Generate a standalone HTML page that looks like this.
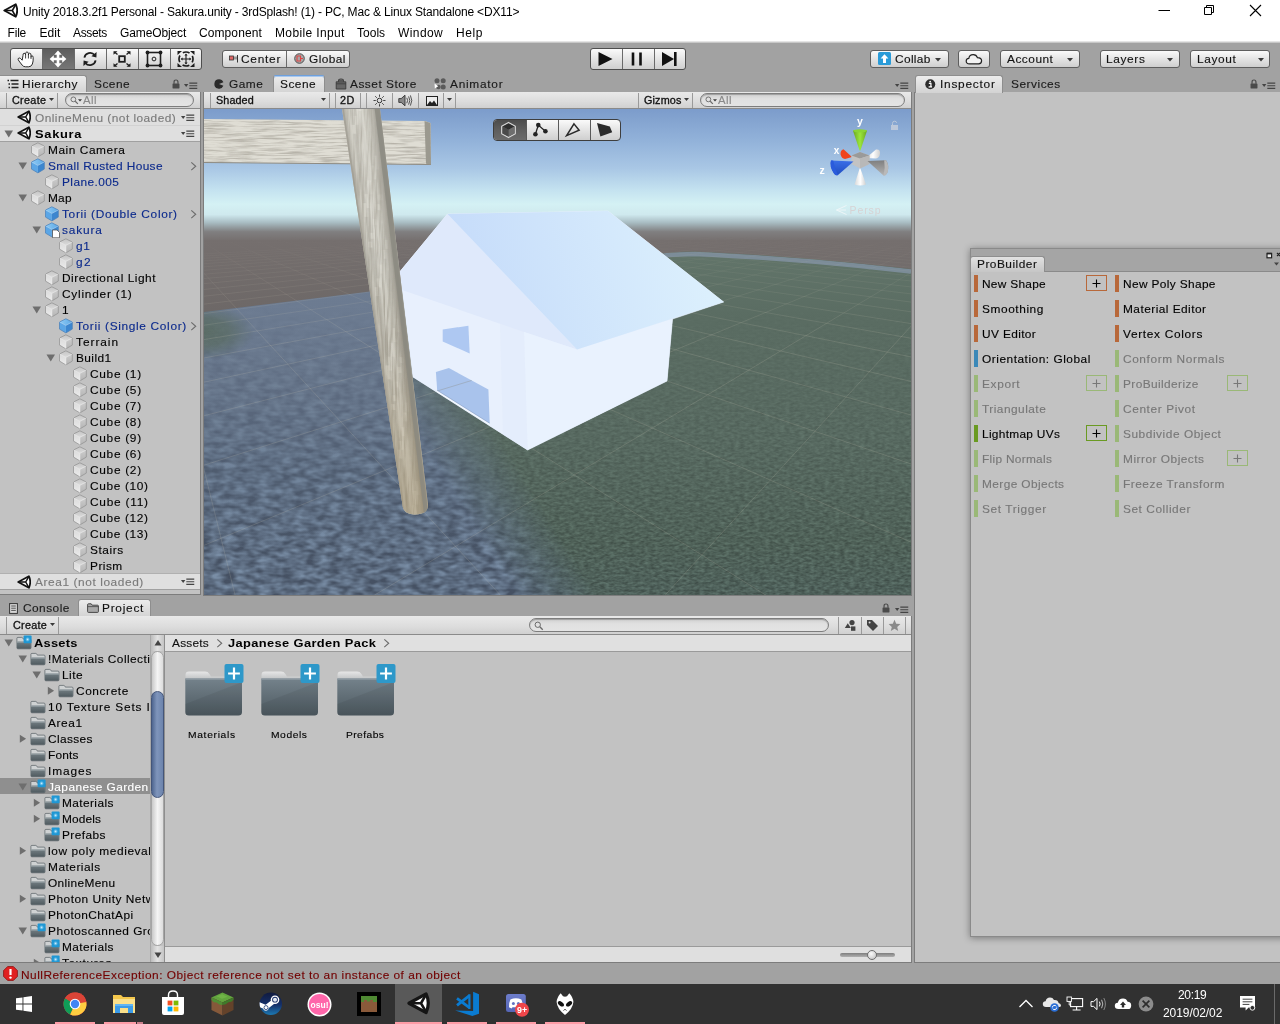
<!DOCTYPE html>
<html><head><meta charset="utf-8"><title>Unity</title>
<style>
html,body{margin:0;padding:0;width:1280px;height:1024px;overflow:hidden;background:#a2a2a2;font-family:"Liberation Sans",sans-serif;}
.t{position:absolute;white-space:pre;display:block}
.a{position:absolute;display:block}
svg{position:absolute;display:block;overflow:visible}
.btn{position:absolute;box-sizing:border-box;border:1px solid #5e5e5e;background:linear-gradient(#fafafa,#e6e6e6 45%,#cfcfcf);border-radius:3px}
.btn.on{background:linear-gradient(#5a5a5a,#6e6e6e 50%,#7a7a7a);}
.tb{position:absolute;background:linear-gradient(#e9e9e9,#dcdcdc 60%,#d0d0d0);border-bottom:1px solid #8a8a8a;box-sizing:border-box}
.sep{position:absolute;width:1px;background:#9a9a9a}
.tab{position:absolute;box-sizing:border-box;background:linear-gradient(#ececec,#d3d3d3);border:1px solid #8e8e8e;border-bottom:none;border-radius:3px 3px 0 0}
.panel{position:absolute;background:#c2c2c2;box-sizing:border-box}
.search{position:absolute;box-sizing:border-box;border:1px solid #7d7d7d;border-radius:7px;background:linear-gradient(#cfcfcf,#e0e0e0 40%,#e4e4e4);box-shadow:inset 0 1px 1px rgba(0,0,0,.25)}
</style></head><body><div id="root" style="position:absolute;left:0;top:0;width:1280px;height:1024px;will-change:transform">
<svg width="0" height="0" style="position:absolute"><defs>
<symbol id="unity" viewBox="0 0 14 14"><path d="M1.2 7 L11.9 1.2 Q14.6 7 11.9 12.8 Z" fill="#fff" stroke="#111" stroke-width="1.75" stroke-linejoin="round"/><path d="M1.5 7 H8.7 M8.7 7 L11.8 1.6 M8.7 7 L11.8 12.4" fill="none" stroke="#111" stroke-width="1.45"/></symbol>
<symbol id="unityw" viewBox="0 0 14 14"><path d="M1.1 7 L10.9 1.2 Q13.4 7 10.9 12.8 Z" fill="none" stroke="#fff" stroke-width="1.9" stroke-linejoin="round"/><path d="M1.5 7 H8 M8 7 L10.7 1.6 M8 7 L10.7 12.4" fill="none" stroke="#fff" stroke-width="1.7"/></symbol>
<linearGradient id="cgt" x1="0" y1="0" x2="0" y2="1"><stop offset="0" stop-color="#c4c4c4"/><stop offset="1" stop-color="#dcdcdc"/></linearGradient><linearGradient id="cgl" x1="0" y1="0" x2="0" y2="1"><stop offset="0" stop-color="#dadada"/><stop offset="1" stop-color="#ececec"/></linearGradient><linearGradient id="cgr" x1="0" y1="0" x2="0" y2="1"><stop offset="0" stop-color="#cdcdcd"/><stop offset="1" stop-color="#b4b4b4"/></linearGradient><linearGradient id="bgt" x1="0" y1="0" x2="1" y2="0"><stop offset="0" stop-color="#8ecbf6"/><stop offset="1" stop-color="#5ea9e6"/></linearGradient><linearGradient id="fgb" x1="0" y1="0" x2="0" y2="1"><stop offset="0" stop-color="#747f84"/><stop offset="1" stop-color="#4f5a5f"/></linearGradient><radialGradient id="bdg"><stop offset="0" stop-color="#d8f2ff"/><stop offset="1" stop-color="#6cc4ee" stop-opacity="0.2"/></radialGradient><linearGradient id="gtop" x1="0" y1="0" x2="0" y2="1"><stop offset="0" stop-color="#ffffff"/><stop offset="1" stop-color="#e8e8e8"/></linearGradient>
<symbol id="cube" viewBox="0 0 16 16"><path d="M7.9 0.8 L14.3 4 L7.9 7.4 L1.5 4Z" fill="url(#cgt)"/><path d="M7.9 7.4 L14.3 4 L14.3 11.1 L7.9 14.9Z" fill="url(#cgr)"/><path d="M1.5 4 L7.9 7.4 L7.9 14.9 L1.5 11.1Z" fill="url(#cgl)"/><path d="M7.9 0.8 L14.3 4 L14.3 11.1 L7.9 14.9 L1.5 11.1 L1.5 4Z" fill="none" stroke="#909090" stroke-width="0.8" stroke-linejoin="round" opacity="0.9"/><path d="M1.5 4 L7.9 7.4 L14.3 4 M7.9 7.4 V14.9" fill="none" stroke="#f4f4f4" stroke-width="0.6" opacity="0.8"/></symbol>
<symbol id="bcube" viewBox="0 0 16 16"><path d="M7.9 0.8 L14.3 4 L7.9 7.4 L1.5 4Z" fill="url(#bgt)"/><path d="M7.9 7.4 L14.3 4 L14.3 11.1 L7.9 14.9Z" fill="#3c86cf"/><path d="M1.5 4 L7.9 7.4 L7.9 14.9 L1.5 11.1Z" fill="#5ba6e6"/><path d="M7.9 0.8 L14.3 4 L14.3 11.1 L7.9 14.9 L1.5 11.1 L1.5 4Z" fill="none" stroke="#4a7fb8" stroke-width="0.8" stroke-linejoin="round" opacity="0.9"/><path d="M1.5 4 L7.9 7.4 L14.3 4" fill="none" stroke="#b5dcfa" stroke-width="0.6" opacity="0.8"/></symbol>
<symbol id="mcube" viewBox="0 0 16 16"><use href="#bcube"/><path d="M8.5 8 H13 L15.5 10.5 V15.8 H8.5Z" fill="#fff" stroke="#555" stroke-width="0.8"/></symbol>
<symbol id="fold" viewBox="0 0 16 16"><path d="M0.9 3.4 Q0.9 2.4 1.9 2.4 H5.6 Q6.5 2.4 6.9 3.3 L7.3 4.1 H14 Q15 4.1 15 5.1 V12.8 Q15 13.8 14 13.8 H1.9 Q0.9 13.8 0.9 12.8Z" fill="#cfd2d3" stroke="#565f64" stroke-width="0.7"/><path d="M1 6.4 H14.9 V12.8 Q14.9 13.7 14 13.7 H1.9 Q1 13.7 1 12.8Z" fill="url(#fgb)"/><path d="M1 6.4 H14.9 V7.5 H1Z" fill="#a3acb0"/></symbol>
<symbol id="bfold" viewBox="0 0 16 16"><use href="#fold"/><rect x="7.6" y="0.6" width="8" height="7.6" rx="0.9" fill="#1f97d4"/><circle cx="11.6" cy="4.4" r="2.3" fill="url(#bdg)"/></symbol>
<symbol id="tri-d" viewBox="0 0 10 10"><path d="M0.5 1.5 H9.5 L5 9Z" fill="#6e6e6e"/></symbol>
<symbol id="tri-r" viewBox="0 0 10 10"><path d="M2 0.5 V9.5 L9 5Z" fill="#6e6e6e"/></symbol>
<symbol id="chev" viewBox="0 0 8 12"><path d="M1.5 1.5 L6.5 6 L1.5 10.5" fill="none" stroke="#6c6c6c" stroke-width="1.3"/></symbol>
<symbol id="pmenu" viewBox="0 0 14 8"><path d="M0 2 H4.5 L2.25 5Z" fill="#444"/><path d="M5.5 1 H14 M5.5 3.7 H14 M5.5 6.4 H14" stroke="#444" stroke-width="1.2"/></symbol>
<symbol id="lock" viewBox="0 0 9 11"><path d="M2.3 5.2 V3.3 Q2.3 1 4.5 1 Q6.7 1 6.7 3.3 V5.2" fill="none" stroke="#4a4a4a" stroke-width="1.3"/><rect x="0.6" y="5" width="7.8" height="5.6" rx="0.5" fill="#4a4a4a"/></symbol>
<symbol id="dd" viewBox="0 0 6 4"><path d="M0 0 H6 L3 3.6Z" fill="#3a3a3a"/></symbol>
<symbol id="mag" viewBox="0 0 12 12"><circle cx="4.5" cy="4.5" r="3.2" fill="none" stroke="#6a6a6a" stroke-width="1.2"/><path d="M7 7 L10.5 10.5" stroke="#6a6a6a" stroke-width="1.6"/></symbol>
</defs></svg>

<div class="a" style="left:0;top:0;width:1280px;height:42px;background:#fff"></div>
<div class="a" style="left:0;top:41px;width:1280px;height:2px;background:linear-gradient(#f4f4f4,#b8b8b8)"></div>
<svg style="left:2.5px;top:3px" width="15" height="15"><use href="#unity"/></svg>
<span class="t" style="left:23px;top:3.8px;line-height:16px;font-size:12px;color:#000;letter-spacing:-0.17px;">Unity 2018.3.2f1 Personal - Sakura.unity - 3rdSplash! (1) - PC, Mac &amp; Linux Standalone &lt;DX11&gt;</span>
<span class="t" style="left:7.5px;top:24.8px;line-height:16px;font-size:12px;color:#000;letter-spacing:-0.18px;">File</span>
<span class="t" style="left:39.5px;top:24.8px;line-height:16px;font-size:12px;color:#000;letter-spacing:0.04px;">Edit</span>
<span class="t" style="left:73px;top:24.8px;line-height:16px;font-size:12px;color:#000;letter-spacing:-0.34px;">Assets</span>
<span class="t" style="left:120px;top:24.8px;line-height:16px;font-size:12px;color:#000;letter-spacing:-0.12px;">GameObject</span>
<span class="t" style="left:199px;top:24.8px;line-height:16px;font-size:12px;color:#000;letter-spacing:0.09px;">Component</span>
<span class="t" style="left:275px;top:24.8px;line-height:16px;font-size:12px;color:#000;letter-spacing:0.36px;">Mobile Input</span>
<span class="t" style="left:357px;top:24.8px;line-height:16px;font-size:12px;color:#000;letter-spacing:0.01px;">Tools</span>
<span class="t" style="left:398px;top:24.8px;line-height:16px;font-size:12px;color:#000;letter-spacing:0.42px;">Window</span>
<span class="t" style="left:456px;top:24.8px;line-height:16px;font-size:12px;color:#000;letter-spacing:0.54px;">Help</span>
<svg style="left:1150px;top:0" width="130" height="22"><path d="M8.5 10.5 H20" stroke="#000" stroke-width="1"/><path d="M54.5 7.5 H61.5 V14.5 H54.5Z M56.5 7.5 V5.5 H63.5 V12.5 H61.5" fill="none" stroke="#000" stroke-width="1"/><path d="M100 5 L111 16 M111 5 L100 16" stroke="#000" stroke-width="1.1"/></svg>
<div class="btn" style="left:10px;top:48px;width:192px;height:22px;overflow:hidden;border-color:#4e4e4e"><div class="a" style="left:31px;top:-1px;width:33px;height:22px;background:linear-gradient(#5c5c5c,#6a6a6a 50%,#787878)"></div><div class="a" style="left:31px;top:-1px;width:1px;height:22px;background:#6a6a6a"></div><div class="a" style="left:63px;top:-1px;width:1px;height:22px;background:#6a6a6a"></div><div class="a" style="left:95px;top:-1px;width:1px;height:22px;background:#6a6a6a"></div><div class="a" style="left:127px;top:-1px;width:1px;height:22px;background:#6a6a6a"></div><div class="a" style="left:159px;top:-1px;width:1px;height:22px;background:#6a6a6a"></div></div>
<svg style="left:10px;top:48px" width="32" height="22" viewBox="0 0 32 22"><path d="M12.2 12.2 L10.4 10.4 Q9 9.4 8.2 10.6 Q7.8 11.6 9 13 L12.2 17.2 Q13.4 18.8 15.6 18.8 H18.6 Q21.4 18.8 22.4 16 Q23.4 13 23.2 9.6 Q23.2 7.6 21.8 7.8 Q21 8 21 9.4 L21 7 Q21 5.2 19.6 5.2 Q18.4 5.4 18.4 7 L18.4 5.6 Q18.2 3.8 16.8 4 Q15.6 4.2 15.6 5.8 L15.6 6.8 Q15.4 5 14 5.2 Q12.8 5.6 13 7.4 Z" fill="#fff" stroke="#222" stroke-width="0.95" stroke-linejoin="round"/><path d="M15.6 6.8 V10.5 M18.4 7 V10.5 M21 9.4 V11" stroke="#222" stroke-width="0.85" fill="none"/></svg>
<svg style="left:42px;top:48px" width="32" height="22" viewBox="0 0 32 22"><path d="M16 2.6 L19.8 6.8 H17.3 V9.7 H20.2 V7.2 L24.4 11 L20.2 14.8 V12.3 H17.3 V15.2 H19.8 L16 19.4 L12.2 15.2 H14.7 V12.3 H11.8 V14.8 L7.6 11 L11.8 7.2 V9.7 H14.7 V6.8 H12.2Z" fill="#fff"/></svg>
<svg style="left:74px;top:48px" width="32" height="22" viewBox="0 0 32 22"><path d="M10.4 9.6 A5.8 5.8 0 0 1 20.6 7" fill="none" stroke="#1e1e1e" stroke-width="1.8"/><path d="M22.6 4 L22.4 9.6 L17.4 8.2Z" fill="#1e1e1e"/><path d="M21.6 12.4 A5.8 5.8 0 0 1 11.4 15" fill="none" stroke="#1e1e1e" stroke-width="1.8"/><path d="M9.4 18 L9.6 12.4 L14.6 13.8Z" fill="#1e1e1e"/></svg>
<svg style="left:106px;top:48px" width="32" height="22" viewBox="0 0 32 22"><rect x="13.2" y="8.2" width="5.6" height="5.6" fill="none" stroke="#1e1e1e" stroke-width="1.8"/><path d="M11.5 6.5 L8.5 4 M20.5 6.5 L23.5 4 M11.5 15.5 L8.5 18 M20.5 15.5 L23.5 18" stroke="#1e1e1e" stroke-width="1.4"/><path d="M7.5 3.2 H11.5 L7.5 6.8Z M24.5 3.2 H20.5 L24.5 6.8Z M7.5 18.8 H11.5 L7.5 15.2Z M24.5 18.8 H20.5 L24.5 15.2Z" fill="#1e1e1e"/></svg>
<svg style="left:138px;top:48px" width="32" height="22" viewBox="0 0 32 22"><rect x="9.5" y="4.5" width="13" height="13" fill="none" stroke="#1e1e1e" stroke-width="1.6"/><circle cx="9.5" cy="4.5" r="1.9" fill="#1e1e1e"/><circle cx="22.5" cy="4.5" r="1.9" fill="#1e1e1e"/><circle cx="9.5" cy="17.5" r="1.9" fill="#1e1e1e"/><circle cx="22.5" cy="17.5" r="1.9" fill="#1e1e1e"/><circle cx="16" cy="11" r="1.9" fill="none" stroke="#1e1e1e" stroke-width="1"/></svg>
<svg style="left:170px;top:48px" width="32" height="22" viewBox="0 0 32 22"><circle cx="16" cy="11" r="7" fill="none" stroke="#1e1e1e" stroke-width="1.7" stroke-dasharray="7 4" stroke-dashoffset="3.5"/><path d="M7.5 3 H12 L7.5 7Z M24.5 3 H20 L24.5 7Z M7.5 19 H12 L7.5 15Z M24.5 19 H20 L24.5 15Z" fill="#1e1e1e"/><path d="M16 6.5 V15.5 M11.5 11 H20.5" stroke="#1e1e1e" stroke-width="1.1"/><path d="M16 5.6 L17.6 7.6 H14.4Z M16 16.4 L17.6 14.4 H14.4Z M10.6 11 L12.6 9.4 V12.6Z M21.4 11 L19.4 9.4 V12.6Z" fill="#1e1e1e"/></svg>
<div class="btn" style="left:222px;top:50px;width:128px;height:18px"></div>
<div class="a" style="left:286px;top:51px;width:1px;height:16px;background:#6a6a6a"></div>
<svg style="left:229px;top:54px" width="10" height="10" viewBox="0 0 10 10"><rect x="0.5" y="2" width="4" height="4" fill="#d66" stroke="#333" stroke-width="0.8"/><path d="M4.5 4 H8.5 M8.5 1 V8.5" stroke="#333" stroke-width="1"/><rect x="5" y="2.5" width="3" height="3" fill="#999"/></svg>
<span class="t" style="left:241.3px;top:51.3px;line-height:16px;font-size:11px;color:#111;letter-spacing:0.69px;transform:scaleX(1.08);transform-origin:0 0;-webkit-text-stroke:0.12px;">Center</span>
<svg style="left:294px;top:53px" width="11" height="11" viewBox="0 0 11 11"><circle cx="5.5" cy="5.5" r="4.8" fill="#a8a8a8" stroke="#444" stroke-width="0.9"/><path d="M3 3 H6.5 V8 H3Z" fill="none" stroke="#d44" stroke-width="1.1"/><path d="M6.5 5.5 H9" stroke="#d44" stroke-width="1"/></svg>
<span class="t" style="left:308.5px;top:51.3px;line-height:16px;font-size:11px;color:#111;letter-spacing:0.38px;transform:scaleX(1.08);transform-origin:0 0;-webkit-text-stroke:0.12px;">Global</span>
<div class="btn" style="left:590px;top:48px;width:96px;height:22px;border-color:#4e4e4e"></div>
<div class="a" style="left:622px;top:49px;width:1px;height:20px;background:#6a6a6a"></div><div class="a" style="left:654px;top:49px;width:1px;height:20px;background:#6a6a6a"></div>
<svg style="left:590px;top:48px" width="96" height="22" viewBox="0 0 96 22"><path d="M8.5 4 L22.5 11 L8.5 18Z" fill="#111"/><path d="M43 4.5 V17.5 M50.5 4.5 V17.5" stroke="#111" stroke-width="2.6"/><path d="M72 4 L84 11 L72 18Z" fill="#111"/><path d="M85.3 4 V18" stroke="#111" stroke-width="2.6"/></svg>
<div class="btn" style="left:870px;top:50px;width:79px;height:18px"></div>
<svg style="left:878px;top:52px" width="13" height="13" viewBox="0 0 13 13"><rect x="0" y="0" width="13" height="13" rx="1.5" fill="#2a9bd8"/><path d="M6.5 2.2 L10.4 6.4 H8 V11 H5 V6.4 H2.6Z" fill="#fff"/></svg>
<span class="t" style="left:895px;top:51.3px;line-height:16px;font-size:11px;color:#111;letter-spacing:0.32px;transform:scaleX(1.08);transform-origin:0 0;-webkit-text-stroke:0.12px;">Collab</span>
<svg style="left:935px;top:57.5px" width="6" height="4"><use href="#dd"/></svg>
<div class="btn" style="left:958px;top:50px;width:32px;height:18px"></div>
<svg style="left:965px;top:53px" width="18" height="12" viewBox="0 0 18 12"><path d="M4.5 10.8 Q1.2 10.8 1.2 8 Q1.2 5.6 3.8 5.4 Q4.4 1.6 8.2 1.6 Q11.4 1.6 12.4 4.6 Q16.6 4.6 16.6 7.8 Q16.6 10.8 13.6 10.8Z" fill="#f2f2f2" stroke="#222" stroke-width="1.2"/></svg>
<div class="btn" style="left:1000px;top:50px;width:80px;height:18px"></div>
<span class="t" style="left:1006.5px;top:51.3px;line-height:16px;font-size:11px;color:#111;letter-spacing:0.46px;transform:scaleX(1.08);transform-origin:0 0;-webkit-text-stroke:0.12px;">Account</span>
<svg style="left:1066.5px;top:57.5px" width="6" height="4"><use href="#dd"/></svg>
<div class="btn" style="left:1100px;top:50px;width:80px;height:18px"></div>
<span class="t" style="left:1106px;top:51.3px;line-height:16px;font-size:11px;color:#111;letter-spacing:0.60px;transform:scaleX(1.08);transform-origin:0 0;-webkit-text-stroke:0.12px;">Layers</span>
<svg style="left:1166.5px;top:57.5px" width="6" height="4"><use href="#dd"/></svg>
<div class="btn" style="left:1190px;top:50px;width:80px;height:18px"></div>
<span class="t" style="left:1196.5px;top:51.3px;line-height:16px;font-size:11px;color:#111;letter-spacing:0.60px;transform:scaleX(1.08);transform-origin:0 0;-webkit-text-stroke:0.12px;">Layout</span>
<svg style="left:1257.5px;top:57.5px" width="6" height="4"><use href="#dd"/></svg>
<div class="tab" style="left:-3px;top:75px;width:90px;height:18px"></div>
<svg style="left:7px;top:79px" width="12" height="10" viewBox="0 0 12 10"><path d="M0.5 1.5 H2 M3.5 1.5 H11.5 M1.5 5 H3 M4.5 5 H11.5 M1.5 8.5 H3 M4.5 8.5 H11.5" stroke="#222" stroke-width="1.5"/></svg>
<span class="t" style="left:22px;top:76.3px;line-height:16px;font-size:11px;color:#111;letter-spacing:0.53px;transform:scaleX(1.08);transform-origin:0 0;-webkit-text-stroke:0.12px;">Hierarchy</span>
<span class="t" style="left:94.2px;top:76.3px;line-height:16px;font-size:11px;color:#1a1a1a;letter-spacing:0.46px;transform:scaleX(1.08);transform-origin:0 0;-webkit-text-stroke:0.12px;">Scene</span>
<svg style="left:171.5px;top:79px" width="8" height="10"><use href="#lock"/></svg>
<svg style="left:183.5px;top:81.5px" width="13.5" height="8"><use href="#pmenu"/></svg>
<div class="panel" style="left:0;top:92px;width:201px;height:503px;border-right:1px solid #7c7c7c;border-bottom:1px solid #7c7c7c"></div>
<div class="tb" style="left:0;top:92px;width:200px;height:17px"></div>
<div class="sep" style="left:6px;top:93px;height:15px"></div><div class="sep" style="left:57px;top:93px;height:15px"></div>
<span class="t" style="left:11.8px;top:93px;line-height:16px;font-size:10px;color:#111;letter-spacing:0.29px;transform:scaleX(1.08);transform-origin:0 0;-webkit-text-stroke:0.3px;">Create</span>
<svg style="left:48.5px;top:98px" width="5" height="3.4"><use href="#dd"/></svg>
<div class="search" style="left:65px;top:93px;width:129px;height:14px"></div>
<svg style="left:69.5px;top:96px" width="9" height="9"><use href="#mag"/></svg><svg style="left:78px;top:99px" width="4" height="3"><use href="#dd"/></svg>
<span class="t" style="left:82.5px;top:91.6px;line-height:16px;font-size:10.5px;color:#8a8a8a;letter-spacing:0.40px;transform:scaleX(1.08);transform-origin:0 0;-webkit-text-stroke:0.12px;">All</span>
<div class="a" style="left:0;top:109px;width:200px;height:33px;background:#dfdfdf;border-bottom:1px solid #a0a0a0;box-sizing:border-box"></div>
<div class="a" style="left:0;top:125px;width:200px;height:1px;background:#d2d2d2"></div>
<svg style="left:17px;top:110px" width="14" height="14"><use href="#unity"/></svg>
<span class="t" style="left:34.7px;top:109.5px;line-height:16px;font-size:11px;color:#7a7a7a;letter-spacing:0.42px;transform:scaleX(1.08);transform-origin:0 0;-webkit-text-stroke:0.12px;">OnlineMenu (not loaded)</span>
<svg style="left:181px;top:114px" width="13.5" height="8"><use href="#pmenu"/></svg>
<svg style="left:4px;top:129px" width="9.5" height="9.5"><use href="#tri-d"/></svg>
<svg style="left:17px;top:126px" width="14" height="14"><use href="#unity"/></svg>
<span class="t" style="left:34.7px;top:125.5px;line-height:16px;font-size:11px;color:#000;font-weight:bold;letter-spacing:0.61px;transform:scaleX(1.17);transform-origin:0 0;">Sakura</span>
<svg style="left:181px;top:130px" width="13.5" height="8"><use href="#pmenu"/></svg>
<svg style="left:30px;top:142px" width="16" height="16"><use href="#cube"/></svg>
<span class="t" style="left:48.4px;top:142px;line-height:16px;font-size:11px;color:#000;letter-spacing:0.51px;transform:scaleX(1.08);transform-origin:0 0;-webkit-text-stroke:0.12px;">Main Camera</span>
<svg style="left:30px;top:158px" width="16" height="16"><use href="#bcube"/></svg>
<svg style="left:17.5px;top:161px" width="9.5" height="9.5"><use href="#tri-d"/></svg>
<svg style="left:189.5px;top:161px" width="7" height="10.5"><use href="#chev"/></svg>
<span class="t" style="left:48.4px;top:158px;line-height:16px;font-size:11px;color:#0c2a8c;letter-spacing:0.34px;transform:scaleX(1.08);transform-origin:0 0;-webkit-text-stroke:0.12px;">Small Rusted House</span>
<svg style="left:44px;top:174px" width="16" height="16"><use href="#cube"/></svg>
<span class="t" style="left:62.4px;top:174px;line-height:16px;font-size:11px;color:#0c2a8c;letter-spacing:0.39px;transform:scaleX(1.08);transform-origin:0 0;-webkit-text-stroke:0.12px;">Plane.005</span>
<svg style="left:30px;top:190px" width="16" height="16"><use href="#cube"/></svg>
<svg style="left:17.5px;top:193px" width="9.5" height="9.5"><use href="#tri-d"/></svg>
<span class="t" style="left:48.4px;top:190px;line-height:16px;font-size:11px;color:#000;letter-spacing:0.18px;transform:scaleX(1.08);transform-origin:0 0;-webkit-text-stroke:0.12px;">Map</span>
<svg style="left:44px;top:206px" width="16" height="16"><use href="#bcube"/></svg>
<svg style="left:189.5px;top:209px" width="7" height="10.5"><use href="#chev"/></svg>
<span class="t" style="left:62.4px;top:206px;line-height:16px;font-size:11px;color:#0c2a8c;letter-spacing:0.62px;transform:scaleX(1.08);transform-origin:0 0;-webkit-text-stroke:0.12px;">Torii (Double Color)</span>
<svg style="left:44px;top:222px" width="16" height="16"><use href="#mcube"/></svg>
<svg style="left:31.5px;top:225px" width="9.5" height="9.5"><use href="#tri-d"/></svg>
<span class="t" style="left:62.4px;top:222px;line-height:16px;font-size:11px;color:#0c2a8c;letter-spacing:0.80px;transform:scaleX(1.08);transform-origin:0 0;-webkit-text-stroke:0.12px;">sakura</span>
<svg style="left:58px;top:238px" width="16" height="16"><use href="#cube"/></svg>
<span class="t" style="left:76.4px;top:238px;line-height:16px;font-size:11px;color:#0c2a8c;letter-spacing:0.62px;transform:scaleX(1.08);transform-origin:0 0;-webkit-text-stroke:0.12px;">g1</span>
<svg style="left:58px;top:254px" width="16" height="16"><use href="#cube"/></svg>
<span class="t" style="left:76.4px;top:254px;line-height:16px;font-size:11px;color:#0c2a8c;letter-spacing:1.18px;transform:scaleX(1.08);transform-origin:0 0;-webkit-text-stroke:0.12px;">g2</span>
<svg style="left:44px;top:270px" width="16" height="16"><use href="#cube"/></svg>
<span class="t" style="left:62.4px;top:270px;line-height:16px;font-size:11px;color:#000;letter-spacing:0.48px;transform:scaleX(1.08);transform-origin:0 0;-webkit-text-stroke:0.12px;">Directional Light</span>
<svg style="left:44px;top:286px" width="16" height="16"><use href="#cube"/></svg>
<span class="t" style="left:62.4px;top:286px;line-height:16px;font-size:11px;color:#000;letter-spacing:0.71px;transform:scaleX(1.08);transform-origin:0 0;-webkit-text-stroke:0.12px;">Cylinder (1)</span>
<svg style="left:44px;top:302px" width="16" height="16"><use href="#cube"/></svg>
<svg style="left:31.5px;top:305px" width="9.5" height="9.5"><use href="#tri-d"/></svg>
<span class="t" style="left:62.4px;top:302px;line-height:16px;font-size:11px;color:#000;letter-spacing:0.40px;transform:scaleX(1.08);transform-origin:0 0;-webkit-text-stroke:0.12px;">1</span>
<svg style="left:58px;top:318px" width="16" height="16"><use href="#bcube"/></svg>
<svg style="left:189.5px;top:321px" width="7" height="10.5"><use href="#chev"/></svg>
<span class="t" style="left:76.4px;top:318px;line-height:16px;font-size:11px;color:#0c2a8c;letter-spacing:0.61px;transform:scaleX(1.08);transform-origin:0 0;-webkit-text-stroke:0.12px;">Torii (Single Color)</span>
<svg style="left:58px;top:334px" width="16" height="16"><use href="#cube"/></svg>
<span class="t" style="left:76.4px;top:334px;line-height:16px;font-size:11px;color:#000;letter-spacing:0.89px;transform:scaleX(1.08);transform-origin:0 0;-webkit-text-stroke:0.12px;">Terrain</span>
<svg style="left:58px;top:350px" width="16" height="16"><use href="#cube"/></svg>
<svg style="left:45.5px;top:353px" width="9.5" height="9.5"><use href="#tri-d"/></svg>
<span class="t" style="left:76.4px;top:350px;line-height:16px;font-size:11px;color:#000;letter-spacing:0.39px;transform:scaleX(1.08);transform-origin:0 0;-webkit-text-stroke:0.12px;">Build1</span>
<svg style="left:72px;top:366px" width="16" height="16"><use href="#cube"/></svg>
<span class="t" style="left:90.4px;top:366px;line-height:16px;font-size:11px;color:#000;letter-spacing:0.65px;transform:scaleX(1.08);transform-origin:0 0;-webkit-text-stroke:0.12px;">Cube (1)</span>
<svg style="left:72px;top:382px" width="16" height="16"><use href="#cube"/></svg>
<span class="t" style="left:90.4px;top:382px;line-height:16px;font-size:11px;color:#000;letter-spacing:0.65px;transform:scaleX(1.08);transform-origin:0 0;-webkit-text-stroke:0.12px;">Cube (5)</span>
<svg style="left:72px;top:398px" width="16" height="16"><use href="#cube"/></svg>
<span class="t" style="left:90.4px;top:398px;line-height:16px;font-size:11px;color:#000;letter-spacing:0.65px;transform:scaleX(1.08);transform-origin:0 0;-webkit-text-stroke:0.12px;">Cube (7)</span>
<svg style="left:72px;top:414px" width="16" height="16"><use href="#cube"/></svg>
<span class="t" style="left:90.4px;top:414px;line-height:16px;font-size:11px;color:#000;letter-spacing:0.65px;transform:scaleX(1.08);transform-origin:0 0;-webkit-text-stroke:0.12px;">Cube (8)</span>
<svg style="left:72px;top:430px" width="16" height="16"><use href="#cube"/></svg>
<span class="t" style="left:90.4px;top:430px;line-height:16px;font-size:11px;color:#000;letter-spacing:0.65px;transform:scaleX(1.08);transform-origin:0 0;-webkit-text-stroke:0.12px;">Cube (9)</span>
<svg style="left:72px;top:446px" width="16" height="16"><use href="#cube"/></svg>
<span class="t" style="left:90.4px;top:446px;line-height:16px;font-size:11px;color:#000;letter-spacing:0.65px;transform:scaleX(1.08);transform-origin:0 0;-webkit-text-stroke:0.12px;">Cube (6)</span>
<svg style="left:72px;top:462px" width="16" height="16"><use href="#cube"/></svg>
<span class="t" style="left:90.4px;top:462px;line-height:16px;font-size:11px;color:#000;letter-spacing:0.65px;transform:scaleX(1.08);transform-origin:0 0;-webkit-text-stroke:0.12px;">Cube (2)</span>
<svg style="left:72px;top:478px" width="16" height="16"><use href="#cube"/></svg>
<span class="t" style="left:90.4px;top:478px;line-height:16px;font-size:11px;color:#000;letter-spacing:0.60px;transform:scaleX(1.08);transform-origin:0 0;-webkit-text-stroke:0.12px;">Cube (10)</span>
<svg style="left:72px;top:494px" width="16" height="16"><use href="#cube"/></svg>
<span class="t" style="left:90.4px;top:494px;line-height:16px;font-size:11px;color:#000;letter-spacing:0.70px;transform:scaleX(1.08);transform-origin:0 0;-webkit-text-stroke:0.12px;">Cube (11)</span>
<svg style="left:72px;top:510px" width="16" height="16"><use href="#cube"/></svg>
<span class="t" style="left:90.4px;top:510px;line-height:16px;font-size:11px;color:#000;letter-spacing:0.60px;transform:scaleX(1.08);transform-origin:0 0;-webkit-text-stroke:0.12px;">Cube (12)</span>
<svg style="left:72px;top:526px" width="16" height="16"><use href="#cube"/></svg>
<span class="t" style="left:90.4px;top:526px;line-height:16px;font-size:11px;color:#000;letter-spacing:0.60px;transform:scaleX(1.08);transform-origin:0 0;-webkit-text-stroke:0.12px;">Cube (13)</span>
<svg style="left:72px;top:542px" width="16" height="16"><use href="#cube"/></svg>
<span class="t" style="left:90.4px;top:542px;line-height:16px;font-size:11px;color:#000;letter-spacing:0.51px;transform:scaleX(1.08);transform-origin:0 0;-webkit-text-stroke:0.12px;">Stairs</span>
<svg style="left:72px;top:558px" width="16" height="16"><use href="#cube"/></svg>
<span class="t" style="left:90.4px;top:558px;line-height:16px;font-size:11px;color:#000;letter-spacing:0.43px;transform:scaleX(1.08);transform-origin:0 0;-webkit-text-stroke:0.12px;">Prism</span>
<div class="a" style="left:0;top:573px;width:200px;height:17px;background:#dfdfdf;border-top:1px solid #b0b0b0;border-bottom:1px solid #a0a0a0;box-sizing:border-box"></div>
<svg style="left:17px;top:574.5px" width="14" height="14"><use href="#unity"/></svg>
<span class="t" style="left:34.7px;top:573.5px;line-height:16px;font-size:11px;color:#7a7a7a;letter-spacing:0.54px;transform:scaleX(1.08);transform-origin:0 0;-webkit-text-stroke:0.12px;">Area1 (not loaded)</span>
<svg style="left:181px;top:578px" width="13.5" height="8"><use href="#pmenu"/></svg>
<svg style="left:214px;top:79px" width="10" height="10" viewBox="0 0 10 10"><path d="M5 0.3 A4.7 4.7 0 1 0 9.4 6.8 L5 5 L9.4 3.2 A4.7 4.7 0 0 0 5 0.3Z" fill="#2a2a2a"/></svg>
<span class="t" style="left:228.75px;top:76.3px;line-height:16px;font-size:11px;color:#1a1a1a;letter-spacing:0.47px;transform:scaleX(1.08);transform-origin:0 0;-webkit-text-stroke:0.12px;">Game</span>
<div class="tab" style="left:273px;top:75px;width:52px;height:18px;border-top:1px solid #6ea0dc;box-shadow:inset 0 1px 0 #a9c8ee"></div>
<span class="t" style="left:279.5px;top:76.3px;line-height:16px;font-size:11px;color:#111;letter-spacing:0.46px;transform:scaleX(1.08);transform-origin:0 0;-webkit-text-stroke:0.12px;">Scene</span>
<svg style="left:335px;top:78px" width="12" height="12" viewBox="0 0 12 12"><path d="M1.2 3.8 H10.8 V11 H1.2Z" fill="#666" stroke="#3a3a3a" stroke-width="0.9"/><path d="M3.6 3.8 V2.6 Q3.6 1 6 1 Q8.4 1 8.4 2.6 V3.8" fill="none" stroke="#3a3a3a" stroke-width="1.1"/><path d="M1.2 5.8 H10.8" stroke="#3a3a3a" stroke-width="0.8"/><path d="M4 1.6 H8 V3.8 H4Z" fill="#555"/></svg>
<span class="t" style="left:349.5px;top:76.3px;line-height:16px;font-size:11px;color:#1a1a1a;letter-spacing:0.46px;transform:scaleX(1.08);transform-origin:0 0;-webkit-text-stroke:0.12px;">Asset Store</span>
<svg style="left:433.5px;top:78px" width="12" height="12" viewBox="0 0 12 12"><circle cx="3" cy="2.8" r="2.5" fill="#5a5a5a"/><circle cx="9.2" cy="2.8" r="2.5" fill="#5a5a5a"/><circle cx="9.2" cy="9" r="2.5" fill="#5a5a5a"/><circle cx="4.4" cy="9" r="2.3" fill="#5a5a5a"/><path d="M0.6 5.6 L4.2 8.2 L0.8 10.6Z" fill="#fff"/></svg>
<span class="t" style="left:449.5px;top:76.3px;line-height:16px;font-size:11px;color:#1a1a1a;letter-spacing:0.67px;transform:scaleX(1.08);transform-origin:0 0;-webkit-text-stroke:0.12px;">Animator</span>
<svg style="left:895px;top:81.5px" width="13.5" height="8"><use href="#pmenu"/></svg>
<div class="panel" style="left:203px;top:92px;width:709px;height:504px;border:1px solid #7c7c7c;border-top:none"></div>
<div class="tb" style="left:204px;top:92px;width:707px;height:17px"></div>
<div class="sep" style="left:210px;top:93px;height:15px"></div>
<div class="sep" style="left:329px;top:93px;height:15px"></div>
<div class="sep" style="left:335px;top:93px;height:15px"></div>
<div class="sep" style="left:360px;top:93px;height:15px"></div>
<div class="sep" style="left:366px;top:93px;height:15px"></div>
<div class="sep" style="left:392px;top:93px;height:15px"></div>
<div class="sep" style="left:418px;top:93px;height:15px"></div>
<div class="sep" style="left:443px;top:93px;height:15px"></div>
<div class="sep" style="left:455px;top:93px;height:15px"></div>
<div class="sep" style="left:638px;top:93px;height:15px"></div>
<div class="sep" style="left:692px;top:93px;height:15px"></div>
<span class="t" style="left:215.5px;top:93px;line-height:16px;font-size:10px;color:#111;letter-spacing:0.08px;transform:scaleX(1.08);transform-origin:0 0;-webkit-text-stroke:0.3px;">Shaded</span>
<svg style="left:320.5px;top:98px" width="5" height="3.4"><use href="#dd"/></svg>
<span class="t" style="left:340px;top:93px;line-height:16px;font-size:10px;color:#111;letter-spacing:0.54px;transform:scaleX(1.08);transform-origin:0 0;-webkit-text-stroke:0.3px;">2D</span>
<svg style="left:373px;top:94px" width="13" height="13" viewBox="0 0 13 13"><circle cx="6.5" cy="6.5" r="2.3" fill="none" stroke="#333" stroke-width="1"/><path d="M6.5 0.5 V2.8 M6.5 10.2 V12.5 M0.5 6.5 H2.8 M10.2 6.5 H12.5 M2.2 2.2 L3.8 3.8 M9.2 9.2 L10.8 10.8 M2.2 10.8 L3.8 9.2 M9.2 3.8 L10.8 2.2" stroke="#333" stroke-width="0.9"/></svg>
<svg style="left:397.5px;top:94px" width="15" height="13" viewBox="0 0 15 13"><path d="M0.8 4.6 H3.2 L7 1.2 V11.8 L3.2 8.4 H0.8Z" fill="#888" stroke="#333" stroke-width="0.9" stroke-linejoin="round"/><path d="M8.8 3.8 Q10.4 6.5 8.8 9.2 M10.6 2.4 Q13 6.5 10.6 10.6 M12.4 1.4 Q15.2 6.5 12.4 11.6" fill="none" stroke="#444" stroke-width="0.9"/></svg>
<svg style="left:426px;top:95.5px" width="12" height="10" viewBox="0 0 12 10"><rect x="0.5" y="0.5" width="11" height="9" fill="#eee" stroke="#222" stroke-width="1"/><path d="M1 9 L4 5 L6 7 L8 4.6 L11 9Z" fill="#222"/></svg>
<svg style="left:447px;top:98px" width="5" height="3.4"><use href="#dd"/></svg>
<span class="t" style="left:643.5px;top:93px;line-height:16px;font-size:10px;color:#111;letter-spacing:0.15px;transform:scaleX(1.08);transform-origin:0 0;-webkit-text-stroke:0.3px;">Gizmos</span>
<svg style="left:684px;top:98px" width="5" height="3.4"><use href="#dd"/></svg>
<div class="search" style="left:700px;top:93px;width:205px;height:14px"></div>
<svg style="left:704.5px;top:96px" width="9" height="9"><use href="#mag"/></svg><svg style="left:713px;top:99px" width="4" height="3"><use href="#dd"/></svg>
<span class="t" style="left:717.5px;top:91.6px;line-height:16px;font-size:10.5px;color:#8a8a8a;letter-spacing:0.40px;transform:scaleX(1.08);transform-origin:0 0;-webkit-text-stroke:0.12px;">All</span>
<svg style="left:204px;top:109px;overflow:hidden" width="707" height="486" viewBox="204 109 707 486">
<defs>
<linearGradient id="sky" gradientUnits="userSpaceOnUse" x1="0" y1="109" x2="0" y2="241">
<stop offset="0" stop-color="#7c9ccb"/><stop offset="0.25" stop-color="#93b3da"/><stop offset="0.45" stop-color="#a9c7e5"/><stop offset="0.62" stop-color="#c5e3f0"/><stop offset="0.72" stop-color="#d4f1f4"/><stop offset="0.80" stop-color="#cfe9ee"/><stop offset="0.86" stop-color="#a9bdc3"/><stop offset="0.93" stop-color="#807f80"/><stop offset="1" stop-color="#756f6e"/></linearGradient>
<linearGradient id="gnd" gradientUnits="userSpaceOnUse" x1="0" y1="240" x2="0" y2="320"><stop offset="0" stop-color="#756f6e"/><stop offset="1" stop-color="#6c6766"/></linearGradient>
<linearGradient id="terr" gradientUnits="userSpaceOnUse" x1="0" y1="250" x2="0" y2="595"><stop offset="0" stop-color="#62756a"/><stop offset="0.2" stop-color="#5a6c62"/><stop offset="0.55" stop-color="#576960"/><stop offset="0.85" stop-color="#4f6158"/><stop offset="1" stop-color="#4e605a"/></linearGradient>
<linearGradient id="blue" gradientUnits="userSpaceOnUse" x1="455" y1="495" x2="545" y2="428"><stop offset="0" stop-color="#687a92" stop-opacity="1"/><stop offset="1" stop-color="#687a92" stop-opacity="0"/></linearGradient>
<linearGradient id="bluev" gradientUnits="userSpaceOnUse" x1="0" y1="290" x2="0" y2="595"><stop offset="0" stop-color="#6d7c92"/><stop offset="0.3" stop-color="#67768b"/><stop offset="0.6" stop-color="#607085"/><stop offset="1" stop-color="#5f6f84"/></linearGradient>
<linearGradient id="roof" gradientUnits="userSpaceOnUse" x1="470" y1="300" x2="700" y2="230"><stop offset="0" stop-color="#c6dcfa"/><stop offset="1" stop-color="#dcf0fd"/></linearGradient>
<linearGradient id="pole" gradientUnits="userSpaceOnUse" x1="0" y1="0" x2="38" y2="0"><stop offset="0" stop-color="#a9a69b"/><stop offset="0.12" stop-color="#cdcbc1"/><stop offset="0.5" stop-color="#d4d2c8"/><stop offset="0.78" stop-color="#bdbaaf"/><stop offset="0.88" stop-color="#918f85"/><stop offset="1" stop-color="#8a887e"/></linearGradient>
<linearGradient id="polev" gradientUnits="userSpaceOnUse" x1="0" y1="109" x2="0" y2="515"><stop offset="0" stop-color="#fffffa" stop-opacity="0.2"/><stop offset="0.4" stop-color="#fffffa" stop-opacity="0.08"/><stop offset="0.6" stop-color="#b09c78" stop-opacity="0.05"/><stop offset="0.8" stop-color="#a8946c" stop-opacity="0.25"/><stop offset="1" stop-color="#a08a60" stop-opacity="0.4"/></linearGradient>
<filter id="noise" x="0" y="0" width="100%" height="100%" color-interpolation-filters="sRGB"><feTurbulence type="fractalNoise" baseFrequency="0.085 0.19" numOctaves="2" seed="3"/><feColorMatrix type="matrix" values="1.8 0 0 0 -0.46  1.8 0 0 0 -0.46  1.8 0 0 0 -0.46  0 0 0 0 1"/></filter>
<filter id="wood" x="0" y="0" width="100%" height="100%"><feTurbulence type="fractalNoise" baseFrequency="0.035 0.55" numOctaves="3" seed="5"/><feColorMatrix type="matrix" values="0 0 0 0 0.42  0 0 0 0 0.40  0 0 0 0 0.35  2.4 0 0 0 -0.95"/></filter>
<filter id="woodv" x="0" y="0" width="100%" height="100%"><feTurbulence type="fractalNoise" baseFrequency="0.45 0.025" numOctaves="3" seed="8"/><feColorMatrix type="matrix" values="0 0 0 0 0.32  0 0 0 0 0.30  0 0 0 0 0.25  2.4 0 0 0 -1.0"/></filter>
<linearGradient id="bmg" gradientUnits="userSpaceOnUse" x1="468" y1="517" x2="527" y2="481"><stop offset="0" stop-color="#fff"/><stop offset="1" stop-color="#000"/></linearGradient>
<radialGradient id="bmg2" gradientUnits="userSpaceOnUse" cx="204" cy="332" r="50" gradientTransform="translate(204 332) scale(1 0.55) translate(-204 -332)"><stop offset="0" stop-color="#000" stop-opacity="0.9"/><stop offset="0.5" stop-color="#000" stop-opacity="0.7"/><stop offset="1" stop-color="#000" stop-opacity="0"/></radialGradient>
<mask id="bm" maskUnits="userSpaceOnUse" x="204" y="245" width="707" height="350"><rect x="204" y="245" width="707" height="350" fill="url(#bmg)"/><path d="M204 245 H385 L400 400 L204 430Z" fill="#fff"/><rect x="204" y="245" width="200" height="200" fill="url(#bmg2)"/></mask>
<filter id="noise2" x="0" y="0" width="100%" height="100%" color-interpolation-filters="sRGB"><feTurbulence type="fractalNoise" baseFrequency="0.2 0.4" numOctaves="2" seed="11"/><feColorMatrix type="matrix" values="1.6 0 0 0 -0.3  1.6 0 0 0 -0.3  1.6 0 0 0 -0.3  0 0 0 0 1"/></filter>
<filter id="pblur" x="-5%" y="-5%" width="110%" height="110%"><feGaussianBlur stdDeviation="0.9 0.2"/></filter>
<linearGradient id="nfade" gradientUnits="userSpaceOnUse" x1="0" y1="300" x2="0" y2="560"><stop offset="0" stop-color="#000"/><stop offset="0.2" stop-color="#333"/><stop offset="1" stop-color="#fff"/></linearGradient><mask id="nf" maskUnits="userSpaceOnUse" x="204" y="245" width="707" height="350"><rect x="204" y="245" width="707" height="350" fill="url(#nfade)"/></mask>
<linearGradient id="gfade" gradientUnits="userSpaceOnUse" x1="0" y1="236" x2="0" y2="340"><stop offset="0" stop-color="#000"/><stop offset="0.2" stop-color="#444"/><stop offset="1" stop-color="#fff"/></linearGradient><mask id="gm" maskUnits="userSpaceOnUse" x="204" y="230" width="707" height="366"><rect x="204" y="230" width="707" height="366" fill="url(#gfade)"/></mask>
<clipPath id="viewclip"><rect x="204" y="236" width="707" height="359"/></clipPath>
<clipPath id="terrclip"><path d="M204 312 L370 291.5 L560 268 Q650 252 695 251.5 Q800 256 911 269 V595 H204Z"/></clipPath>
<clipPath id="plankclip"><path d="M204 119 L425 121 L430.5 123 L431 164.5 L204 162.5Z"/></clipPath>
<clipPath id="poleclip"><path d="M342 109 H380 L428 505 Q428 514 415 514.5 Q403 514 402.5 505Z"/></clipPath>
</defs>
<rect x="204" y="109" width="707" height="131" fill="url(#sky)"/>
<rect x="204" y="240" width="707" height="355" fill="url(#gnd)"/>
<!-- terrain -->
<g clip-path="url(#terrclip)">
<rect x="204" y="245" width="707" height="350" fill="url(#terr)"/>
<rect x="204" y="245" width="707" height="350" filter="url(#noise2)" opacity="0.2" mask="url(#nf)" style="mix-blend-mode:overlay"/>
<g mask="url(#bm)">
<rect x="204" y="245" width="707" height="350" fill="url(#bluev)"/>
<rect x="204" y="245" width="707" height="350" filter="url(#noise)" opacity="0.27" mask="url(#nf)" style="mix-blend-mode:overlay"/>
</g>
<path d="M600 264.5 Q650 254.5 695 254 Q800 258.5 911 271.5" fill="none" stroke="#8797ad" stroke-width="4.5" opacity="0.7"/>
</g>
<!-- grid lines -->
<g clip-path="url(#viewclip)" mask="url(#gm)"><path d="M145.7 234 L235.3 596 M167.9 234 L501.2 596 M190.1 234 L767.2 596 M212.3 234 L1033.2 596 M234.6 234 L1299.3 596 M256.8 234 L1565.2 596 M279.0 234 L1831.2 596 M301.2 234 L2097.3 596 M323.4 234 L2363.3 596 M345.7 234 L2629.2 596 M367.9 234 L2895.2 596 M390.1 234 L3161.2 596 M412.3 234 L3427.3 596 M434.6 234 L3693.3 596 M456.8 234 L3959.2 596 M479.0 234 L4225.2 596 M501.2 234 L4491.2 596 M523.5 234 L4757.2 596 M545.7 234 L5023.3 596 M567.9 234 L5289.2 596 M590.1 234 L5555.3 596 M612.3 234 L5821.2 596 M634.6 234 L6087.2 596 M656.8 234 L6353.3 596 M679.0 234 L6619.3 596 M550.6 234 L-5743.2 596 M570.8 234 L-5451.9 596 M591.0 234 L-5160.7 596 M611.2 234 L-4869.4 596 M631.4 234 L-4578.2 596 M651.7 234 L-4286.9 596 M671.9 234 L-3995.7 596 M692.1 234 L-3704.4 596 M712.3 234 L-3413.2 596 M732.5 234 L-3121.9 596 M752.7 234 L-2830.7 596 M772.9 234 L-2539.5 596 M793.2 234 L-2248.2 596 M813.4 234 L-1957.0 596 M833.6 234 L-1665.7 596 M853.8 234 L-1374.5 596 M874.0 234 L-1083.2 596 M894.2 234 L-792.0 596 M914.4 234 L-500.7 596 M934.7 234 L-209.5 596 M954.9 234 L81.8 596 M975.1 234 L373.0 596 M995.3 234 L664.3 596 M1015.5 234 L955.5 596" fill="none" stroke="#d2c9b6" stroke-width="0.9" opacity="0.19"/></g>
<!-- plank -->
<path d="M204 119 L425 121 L430.5 123 L431 164.5 L204 162.5Z" fill="#dfddd4"/>
<g clip-path="url(#plankclip)"><rect x="204" y="115" width="230" height="52" filter="url(#wood)" opacity="0.85"/></g>
<path d="M204 162.5 L431 164.5" stroke="#8e8b83" stroke-width="1.2"/>
<path d="M424.5 121 L430.5 123 L431 164.5 L426 163.8Z" fill="#9b998f"/>
<!-- house -->
<path d="M447.5 214 L608 211 L723.7 302 L672.5 319 L667 381 L527.6 450 L413 377 L400 271.5Z" fill="#e8f0fd" stroke="#e8f0fd" stroke-width="0.6"/>
<path d="M447.5 214 L400 271.5 L413 377 L527.6 450 L524 332 L577 349.5Z" fill="#e8f0fd"/>
<path d="M447.5 214 L400 271.5 L402 290 L524 332 L577 349.5Z" fill="#dfe9fb"/>
<path d="M524 332 L577 349.5 L672.5 319 L667 381 L527.6 450Z" fill="#e9f2fe"/>
<path d="M500 324 L524 332 L527.6 450 L503 434.5Z" fill="#dfe9f9" opacity="0.4"/>
<path d="M447.5 214 L608 211 L723.7 302 L577 349.5Z" fill="url(#roof)"/>
<path d="M442.7 329.4 L468.4 325.8 L469.7 353.6 L442.7 341.4Z" fill="#aec8f2"/>
<path d="M435.9 371.9 L448.9 368 L488.4 389.4 L489.7 423.4 L437.2 390.6Z" fill="#a9c3ec"/>
<path d="M437.2 391 L471.6 380.5" stroke="#98a3b0" stroke-width="0.8" opacity="0.8"/><path d="M437.2 391.4 L489.7 424.6" stroke="#f4f8ff" stroke-width="1.2"/><path d="M437.4 390.4 L489.6 423.2" stroke="#8fa3c4" stroke-width="0.6"/>
<!-- pole -->
<path d="M342 109 H380 L428 505 Q428 514 415 514.5 Q403 514 402.5 505Z" fill="#c3bfb3"/>
<g clip-path="url(#poleclip)">
<g filter="url(#pblur)"><path d="M342.0 109 L344.6 109 L404.3 516 L402.5 516Z" fill="#98958b"/><path d="M344.3 109 L347.6 109 L406.4 516 L404.0 516Z" fill="#b5b2a8"/><path d="M347.3 109 L353.7 109 L410.4 516 L406.1 516Z" fill="#cac8be"/><path d="M353.4 109 L363.2 109 L416.8 516 L410.1 516Z" fill="#d3d1c8"/><path d="M362.9 109 L368.9 109 L420.7 516 L416.5 516Z" fill="#c9c7bd"/><path d="M368.6 109 L372.3 109 L422.9 516 L420.4 516Z" fill="#b4b1a7"/><path d="M372.0 109 L375.0 109 L424.7 516 L422.6 516Z" fill="#9c998f"/><path d="M374.7 109 L380.3 109 L428.3 516 L424.4 516Z" fill="#8a887f"/><path d="M351.1 109 L408.6 516" stroke="#5a574e" stroke-width="1.3" opacity="0.45" stroke-dasharray="40 9 70 14 25 6" stroke-dashoffset="24"/><path d="M354.5 109 L410.9 516" stroke="#5a574e" stroke-width="1.3" opacity="0.3" stroke-dasharray="40 9 70 14 25 6" stroke-dashoffset="33"/><path d="M365.6 109 L418.3 516" stroke="#5a574e" stroke-width="1.3" opacity="0.3" stroke-dasharray="40 9 70 14 25 6" stroke-dashoffset="62"/><path d="M359.9 109 L414.5 516" stroke="#5a574e" stroke-width="1.3" opacity="0.2" stroke-dasharray="40 9 70 14 25 6" stroke-dashoffset="47"/><path d="M369.4 109 L420.9 516" stroke="#5a574e" stroke-width="1.3" opacity="0.25" stroke-dasharray="40 9 70 14 25 6" stroke-dashoffset="72"/></g>
<rect x="340" y="109" width="90" height="410" filter="url(#woodv)" opacity="0.75"/>
<rect x="340" y="109" width="90" height="410" fill="url(#polev)"/><path d="M374.7 109 L380.5 109 L428.5 516 L424.4 516Z" fill="#8b8981" opacity="0.8"/><path d="M342.0 109 L343.9 109 L403.8 516 L402.5 516Z" fill="#99968b" opacity="0.55"/>
</g>
</svg>
<div class="btn" style="left:493px;top:119px;width:128px;height:22px;overflow:hidden;border-color:#3e3e3e;border-radius:4px"><div class="a" style="left:-1px;top:-1px;width:33px;height:22px;background:linear-gradient(#4a4a4a,#5e5e5e 50%,#6c6c6c)"></div><div class="a" style="left:31.5px;top:-1px;width:1px;height:22px;background:#5a5a5a"></div><div class="a" style="left:63.5px;top:-1px;width:1px;height:22px;background:#5a5a5a"></div><div class="a" style="left:95.5px;top:-1px;width:1px;height:22px;background:#5a5a5a"></div></div>
<svg style="left:493px;top:119px" width="128" height="22" viewBox="493 119 128 22">
<path d="M508.5 122.4 L515.3 126.2 V133.8 L508.5 137.6 L501.7 133.8 V126.2Z" fill="#5a5a5a" stroke="#d8d8d8" stroke-width="1.2" stroke-linejoin="round"/>
<path d="M508.5 123.4 L514.4 126.6 L508.5 129.8 L502.6 126.6Z" fill="#2e2e2e"/><path d="M508.5 129.8 L514.4 126.6 V133.4 L508.5 136.6Z" fill="#6e6e6e"/><path d="M508.5 129.8 L502.6 126.6 V133.4 L508.5 136.6Z" fill="#4a4a4a"/>
<path d="M535.4 134.3 L538.3 125.1 L545.4 131.3" fill="none" stroke="#222" stroke-width="1.3"/><circle cx="538.3" cy="125.1" r="2.3" fill="#222"/><circle cx="545.4" cy="131.3" r="2.3" fill="#222"/><circle cx="535.4" cy="134.3" r="2.3" fill="#222"/>
<path d="M574 123.9 L579.1 130.2 L566.6 135.6Z" fill="none" stroke="#2a2a2a" stroke-width="1.5" stroke-linejoin="miter"/>
<path d="M597 123.1 L609.8 126.6 L612.2 132.2 L600.4 136.6Z" fill="#2a2a2a"/>
</svg>
<svg style="left:815px;top:112px" width="96" height="110" viewBox="815 112 96 110">
<defs><linearGradient id="gzg" x1="0" y1="0" x2="1" y2="0"><stop offset="0" stop-color="#6aa624"/><stop offset="0.5" stop-color="#9be63c"/><stop offset="1" stop-color="#6aa624"/></linearGradient>
<linearGradient id="gzb" x1="0" y1="0" x2="0" y2="1"><stop offset="0" stop-color="#3a6fe8"/><stop offset="1" stop-color="#1f4cc0"/></linearGradient>
<linearGradient id="gzw" x1="0" y1="0" x2="1" y2="0"><stop offset="0" stop-color="#d8d8d8"/><stop offset="0.5" stop-color="#ffffff"/><stop offset="1" stop-color="#cfcfcf"/></linearGradient>
<linearGradient id="gzr" x1="0" y1="0" x2="0" y2="1"><stop offset="0" stop-color="#7e7e7e"/><stop offset="1" stop-color="#b4b4b4"/></linearGradient></defs>
<!-- back cones -->
<path d="M866 158 L876 149.5 Q880.5 149 880 153.5 Q879.5 158 876 158.5Z" fill="url(#gzw)"/>
<path d="M852 157 L843.5 149.2 Q840 150.5 840.6 154.5 Q841.5 158.5 845 159Z" fill="#f0441e"/>
<!-- center cube -->
<path d="M851.5 155.5 L860 152 L869.5 155.5 L869.5 164 L860 168.5 L851.5 164Z" fill="#c3c3c3"/>
<path d="M851.5 155.5 L860 152 L869.5 155.5 L860 158.5Z" fill="#9a9a9a"/>
<path d="M860 158.5 L869.5 155.5 V164 L860 168.5Z" fill="#b8b8b8"/>
<!-- green y cone -->
<path d="M853 130.8 Q860 128.8 867 130.8 L860.4 150.5 H859.6Z" fill="url(#gzg)"/>
<ellipse cx="860" cy="130.8" rx="7" ry="1.6" fill="#8ad435"/>
<!-- blue z cone -->
<path d="M853.5 161.5 L831 160.4 Q829.2 166 834 173.5 Q836 176.2 838 175Z" fill="url(#gzb)"/>
<path d="M831 160.4 Q829.2 166 834 173.5 Q836 176.2 838 175 Q834.5 168 833.2 160.5Z" fill="#2a5bdc"/>
<!-- right gray cone -->
<path d="M867.5 161 L886 160.2 Q889.5 165 887.5 172.5 Q886 176 883.5 175.4Z" fill="url(#gzr)"/>
<path d="M886 160.2 Q889.5 165 887.5 172.5 Q886 176 883.5 175.4 Q885.5 168 884.2 160.3Z" fill="#b9b9b9"/>
<!-- bottom white cone -->
<path d="M859.6 168.5 H860.4 L866 184.4 Q860 186.6 854.6 184.4Z" fill="url(#gzw)"/>
<!-- labels -->
<text x="860" y="125.2" font-family="Liberation Sans" font-size="10.5" font-weight="bold" fill="#fff" text-anchor="middle">y</text>
<text x="836.6" y="154" font-family="Liberation Sans" font-size="10" font-weight="bold" fill="#fff" text-anchor="middle">x</text>
<text x="822" y="174.2" font-family="Liberation Sans" font-size="10.5" font-weight="bold" fill="#fff" text-anchor="middle">z</text>
<!-- lock -->
<path d="M892.5 125 V123.4 Q892.5 121.2 894.6 121.2 Q896.4 121.2 896.6 122.8" fill="none" stroke="#bcc8da" stroke-width="1"/><rect x="891" y="125" width="7" height="5" fill="#bcc8da"/>
<!-- persp -->
<path d="M846.5 205.5 L836.5 210 L846.5 214.5 M836.5 210 H846" fill="none" stroke="#eef6f8" stroke-width="1" opacity="0.95"/>
<text x="849.5" y="214" font-family="Liberation Sans" font-size="10.5" fill="#d8cfd0" letter-spacing="0.9" opacity="0.85">Persp</text>
</svg>
<svg style="left:9px;top:603px" width="9" height="11" viewBox="0 0 9 11"><rect x="0.6" y="0.6" width="7.8" height="9.8" fill="#d8d8d8" stroke="#333" stroke-width="1"/><path d="M2.2 3 H6.8 M2.2 5.2 H6.8 M2.2 7.4 H6.8" stroke="#444" stroke-width="0.9"/></svg>
<span class="t" style="left:22.5px;top:600.3px;line-height:16px;font-size:11px;color:#1a1a1a;letter-spacing:0.43px;transform:scaleX(1.08);transform-origin:0 0;-webkit-text-stroke:0.12px;">Console</span>
<div class="tab" style="left:78px;top:599px;width:73px;height:18px"></div>
<svg style="left:87px;top:603px" width="12" height="10" viewBox="0 0 12 10"><path d="M0.6 1.6 Q0.6 0.8 1.4 0.8 H4.2 L5.2 2.2 H10.6 Q11.4 2.2 11.4 3 V8.6 Q11.4 9.4 10.6 9.4 H1.4 Q0.6 9.4 0.6 8.6Z" fill="#a9a9a9" stroke="#3a3a3a" stroke-width="0.9"/><path d="M0.8 3.6 H11.2" stroke="#3a3a3a" stroke-width="0.7"/></svg>
<span class="t" style="left:102.2px;top:600.3px;line-height:16px;font-size:11px;color:#111;letter-spacing:0.68px;transform:scaleX(1.08);transform-origin:0 0;-webkit-text-stroke:0.12px;">Project</span>
<svg style="left:881.5px;top:603px" width="8" height="10"><use href="#lock"/></svg>
<svg style="left:895px;top:605.5px" width="13.5" height="8"><use href="#pmenu"/></svg>
<div class="panel" style="left:0;top:616px;width:912px;height:347px;border-right:1px solid #7c7c7c;border-bottom:1px solid #7c7c7c"></div>
<div class="tb" style="left:0;top:616px;width:911px;height:19px"></div>
<div class="sep" style="left:6px;top:617px;height:17px"></div><div class="sep" style="left:58px;top:617px;height:17px"></div>
<span class="t" style="left:12.75px;top:618px;line-height:16px;font-size:10px;color:#111;letter-spacing:0.24px;transform:scaleX(1.08);transform-origin:0 0;-webkit-text-stroke:0.3px;">Create</span>
<svg style="left:50px;top:623px" width="5" height="3.4"><use href="#dd"/></svg>
<div class="search" style="left:529px;top:618px;width:300px;height:14px"></div>
<svg style="left:534px;top:620.5px" width="10" height="10"><use href="#mag"/></svg>
<div class="sep" style="left:838px;top:617px;height:17px"></div>
<div class="sep" style="left:861px;top:617px;height:17px"></div>
<div class="sep" style="left:883px;top:617px;height:17px"></div>
<div class="sep" style="left:905px;top:617px;height:17px"></div>
<svg style="left:844px;top:619px" width="13" height="13" viewBox="0 0 13 13"><circle cx="8" cy="3.6" r="2.6" fill="#444"/><path d="M0.8 9 L3.8 4.2 L6.8 9Z" fill="#444"/><rect x="7" y="7.4" width="4.4" height="4.4" fill="#444"/></svg>
<svg style="left:866px;top:619px" width="13" height="13" viewBox="0 0 13 13"><path d="M1 1 H6 L12 7 L7 12 L1 6Z" fill="#444"/><circle cx="3.6" cy="3.6" r="1" fill="#ddd"/></svg>
<svg style="left:888px;top:619px" width="13" height="13" viewBox="0 0 13 13"><path d="M6.5 0.8 L8.2 4.8 L12.4 5.1 L9.2 7.9 L10.2 12.1 L6.5 9.8 L2.8 12.1 L3.8 7.9 L0.6 5.1 L4.8 4.8Z" fill="#8a8a8a"/></svg>
<div class="a" style="left:0;top:635px;width:150px;height:327px;overflow:hidden">
<svg style="left:15.5px;top:0px" width="16" height="16"><use href="#bfold"/></svg>
<svg style="left:3.5px;top:3px" width="9.5" height="9.5"><use href="#tri-d"/></svg>
<span class="t" style="left:34.4px;top:0px;line-height:16px;font-size:11px;color:#000;font-weight:bold;letter-spacing:0.19px;transform:scaleX(1.17);transform-origin:0 0;">Assets</span>
<svg style="left:29.5px;top:16px" width="16" height="16"><use href="#fold"/></svg>
<svg style="left:17.5px;top:19px" width="9.5" height="9.5"><use href="#tri-d"/></svg>
<span class="t" style="left:48.4px;top:16px;line-height:16px;font-size:11px;color:#000;letter-spacing:0.42px;transform:scaleX(1.08);transform-origin:0 0;-webkit-text-stroke:0.12px;">!Materials Collecti</span>
<svg style="left:43.5px;top:32px" width="16" height="16"><use href="#fold"/></svg>
<svg style="left:31.5px;top:35px" width="9.5" height="9.5"><use href="#tri-d"/></svg>
<span class="t" style="left:62.4px;top:32px;line-height:16px;font-size:11px;color:#000;letter-spacing:0.47px;transform:scaleX(1.08);transform-origin:0 0;-webkit-text-stroke:0.12px;">Lite</span>
<svg style="left:57.5px;top:48px" width="16" height="16"><use href="#fold"/></svg>
<svg style="left:45.8px;top:51.2px" width="9" height="9.5"><use href="#tri-r"/></svg>
<span class="t" style="left:76.4px;top:48px;line-height:16px;font-size:11px;color:#000;letter-spacing:0.55px;transform:scaleX(1.08);transform-origin:0 0;-webkit-text-stroke:0.12px;">Concrete</span>
<svg style="left:29.5px;top:64px" width="16" height="16"><use href="#fold"/></svg>
<span class="t" style="left:48.4px;top:64px;line-height:16px;font-size:11px;color:#000;letter-spacing:0.74px;transform:scaleX(1.08);transform-origin:0 0;-webkit-text-stroke:0.12px;">10 Texture Sets II</span>
<svg style="left:29.5px;top:80px" width="16" height="16"><use href="#fold"/></svg>
<span class="t" style="left:48.4px;top:80px;line-height:16px;font-size:11px;color:#000;letter-spacing:0.53px;transform:scaleX(1.08);transform-origin:0 0;-webkit-text-stroke:0.12px;">Area1</span>
<svg style="left:29.5px;top:96px" width="16" height="16"><use href="#fold"/></svg>
<svg style="left:17.8px;top:99.2px" width="9" height="9.5"><use href="#tri-r"/></svg>
<span class="t" style="left:48.4px;top:96px;line-height:16px;font-size:11px;color:#000;letter-spacing:0.33px;transform:scaleX(1.08);transform-origin:0 0;-webkit-text-stroke:0.12px;">Classes</span>
<svg style="left:29.5px;top:112px" width="16" height="16"><use href="#fold"/></svg>
<span class="t" style="left:48.4px;top:112px;line-height:16px;font-size:11px;color:#000;letter-spacing:0.14px;transform:scaleX(1.08);transform-origin:0 0;-webkit-text-stroke:0.12px;">Fonts</span>
<svg style="left:29.5px;top:128px" width="16" height="16"><use href="#fold"/></svg>
<span class="t" style="left:48.4px;top:128px;line-height:16px;font-size:11px;color:#000;letter-spacing:0.82px;transform:scaleX(1.08);transform-origin:0 0;-webkit-text-stroke:0.12px;">Images</span>
<div class="a" style="left:0;top:143px;width:150px;height:16px;background:#8f8f8f"></div>
<svg style="left:29.5px;top:144px" width="16" height="16"><use href="#bfold"/></svg>
<svg style="left:17.5px;top:147px" width="9.5" height="9.5"><use href="#tri-d"/></svg>
<span class="t" style="left:48.4px;top:144px;line-height:16px;font-size:11px;color:#fff;letter-spacing:0.38px;transform:scaleX(1.08);transform-origin:0 0;-webkit-text-stroke:0.12px;">Japanese Garden</span>
<svg style="left:43.5px;top:160px" width="16" height="16"><use href="#bfold"/></svg>
<svg style="left:31.8px;top:163.2px" width="9" height="9.5"><use href="#tri-r"/></svg>
<span class="t" style="left:62.4px;top:160px;line-height:16px;font-size:11px;color:#000;letter-spacing:0.37px;transform:scaleX(1.08);transform-origin:0 0;-webkit-text-stroke:0.12px;">Materials</span>
<svg style="left:43.5px;top:176px" width="16" height="16"><use href="#bfold"/></svg>
<svg style="left:31.8px;top:179.2px" width="9" height="9.5"><use href="#tri-r"/></svg>
<span class="t" style="left:62.4px;top:176px;line-height:16px;font-size:11px;color:#000;letter-spacing:0.11px;transform:scaleX(1.08);transform-origin:0 0;-webkit-text-stroke:0.12px;">Models</span>
<svg style="left:43.5px;top:192px" width="16" height="16"><use href="#bfold"/></svg>
<span class="t" style="left:62.4px;top:192px;line-height:16px;font-size:11px;color:#000;letter-spacing:0.38px;transform:scaleX(1.08);transform-origin:0 0;-webkit-text-stroke:0.12px;">Prefabs</span>
<svg style="left:29.5px;top:208px" width="16" height="16"><use href="#fold"/></svg>
<svg style="left:17.8px;top:211.2px" width="9" height="9.5"><use href="#tri-r"/></svg>
<span class="t" style="left:48.4px;top:208px;line-height:16px;font-size:11px;color:#000;letter-spacing:0.53px;transform:scaleX(1.08);transform-origin:0 0;-webkit-text-stroke:0.12px;">low poly medieval</span>
<svg style="left:29.5px;top:224px" width="16" height="16"><use href="#fold"/></svg>
<span class="t" style="left:48.4px;top:224px;line-height:16px;font-size:11px;color:#000;letter-spacing:0.46px;transform:scaleX(1.08);transform-origin:0 0;-webkit-text-stroke:0.12px;">Materials</span>
<svg style="left:29.5px;top:240px" width="16" height="16"><use href="#fold"/></svg>
<span class="t" style="left:48.4px;top:240px;line-height:16px;font-size:11px;color:#000;letter-spacing:0.32px;transform:scaleX(1.08);transform-origin:0 0;-webkit-text-stroke:0.12px;">OnlineMenu</span>
<svg style="left:29.5px;top:256px" width="16" height="16"><use href="#fold"/></svg>
<svg style="left:17.8px;top:259.2px" width="9" height="9.5"><use href="#tri-r"/></svg>
<span class="t" style="left:48.4px;top:256px;line-height:16px;font-size:11px;color:#000;letter-spacing:0.46px;transform:scaleX(1.08);transform-origin:0 0;-webkit-text-stroke:0.12px;">Photon Unity Netw</span>
<svg style="left:29.5px;top:272px" width="16" height="16"><use href="#fold"/></svg>
<span class="t" style="left:48.4px;top:272px;line-height:16px;font-size:11px;color:#000;letter-spacing:0.40px;transform:scaleX(1.08);transform-origin:0 0;-webkit-text-stroke:0.12px;">PhotonChatApi</span>
<svg style="left:29.5px;top:288px" width="16" height="16"><use href="#bfold"/></svg>
<svg style="left:17.5px;top:291px" width="9.5" height="9.5"><use href="#tri-d"/></svg>
<span class="t" style="left:48.4px;top:288px;line-height:16px;font-size:11px;color:#000;letter-spacing:0.42px;transform:scaleX(1.08);transform-origin:0 0;-webkit-text-stroke:0.12px;">Photoscanned Gro</span>
<svg style="left:43.5px;top:304px" width="16" height="16"><use href="#bfold"/></svg>
<span class="t" style="left:62.4px;top:304px;line-height:16px;font-size:11px;color:#000;letter-spacing:0.37px;transform:scaleX(1.08);transform-origin:0 0;-webkit-text-stroke:0.12px;">Materials</span>
<svg style="left:43.5px;top:320px" width="16" height="16"><use href="#bfold"/></svg>
<svg style="left:31.8px;top:323.2px" width="9" height="9.5"><use href="#tri-r"/></svg>
<span class="t" style="left:62.4px;top:320px;line-height:16px;font-size:11px;color:#000;letter-spacing:0.60px;transform:scaleX(1.08);transform-origin:0 0;-webkit-text-stroke:0.12px;">Textures</span>
</div>
<div class="a" style="left:150px;top:635px;width:15px;height:327px;background:#c2c2c2;border-left:1px solid #a8a8a8;border-right:1px solid #8e8e8e;box-sizing:border-box"></div>
<div class="a" style="left:151px;top:651px;width:13px;height:295px;border-radius:6.5px;background:linear-gradient(90deg,#c9c9c9,#f4f4f4 50%,#dcdcdc);border:1px solid #a5a5a5;box-sizing:border-box"></div>
<div class="a" style="left:151px;top:691px;width:13px;height:107px;border-radius:6.5px;background:linear-gradient(90deg,#4f6690,#7f95bb 45%,#6d84ad);border:1px solid #44567a;box-sizing:border-box"></div>
<div class="a" style="left:151px;top:635px;width:13px;height:16px;background:linear-gradient(90deg,#bcbcbc,#e2e2e2 50%,#c4c4c4)"></div><div class="a" style="left:151px;top:946px;width:13px;height:16px;background:linear-gradient(90deg,#bcbcbc,#e2e2e2 50%,#c4c4c4)"></div>
<svg style="left:153.5px;top:639px" width="8" height="8" viewBox="0 0 8 8"><path d="M0.5 6.5 H7.5 L4 1Z" fill="#444"/></svg>
<svg style="left:153.5px;top:951px" width="8" height="8" viewBox="0 0 8 8"><path d="M0.5 1.5 H7.5 L4 7Z" fill="#444"/></svg>
<div class="a" style="left:165px;top:635px;width:746px;height:17px;background:#e0e0e0;border-bottom:1px solid #9a9a9a;box-sizing:border-box"></div>
<span class="t" style="left:171.8px;top:635px;line-height:16px;font-size:11px;color:#111;letter-spacing:0.19px;transform:scaleX(1.08);transform-origin:0 0;-webkit-text-stroke:0.12px;">Assets</span>
<svg style="left:215.5px;top:638px" width="7" height="10.5"><use href="#chev"/></svg>
<span class="t" style="left:228px;top:635px;line-height:16px;font-size:11px;color:#000;font-weight:bold;letter-spacing:0.31px;transform:scaleX(1.17);transform-origin:0 0;">Japanese Garden Pack</span>
<svg style="left:382.5px;top:638px" width="7" height="10.5"><use href="#chev"/></svg>
<svg style="left:184.5px;top:664px" width="60" height="53" viewBox="0 0 60 53">
<defs><linearGradient id="fb0" x1="0" y1="0" x2="0" y2="1"><stop offset="0" stop-color="#74828b"/><stop offset="1" stop-color="#4d5960"/></linearGradient><linearGradient id="ft0" x1="0" y1="0" x2="0" y2="1"><stop offset="0" stop-color="#e6e6e6"/><stop offset="1" stop-color="#a9adaf"/></linearGradient></defs>
<path d="M0.5 11 Q0.5 7.6 4 7.6 H20 Q23 7.6 24.4 10 L26 12.6 H57 V20 H0.5Z" fill="url(#ft0)"/>
<path d="M0.3 14.6 H57 V48 Q57 51.6 53.4 51.6 H3.9 Q0.3 51.6 0.3 48Z" fill="url(#fb0)"/>
<path d="M0.3 14.6 H57 V16 H0.3Z" fill="#8e9aa1" opacity="0.8"/>
<path d="M0.3 40 L57 18 V48 Q57 51.6 53.4 51.6 H3.9 Q0.3 51.6 0.3 48Z" fill="#000" opacity="0.06"/>
<rect x="39.5" y="0" width="19" height="19" rx="2" fill="#2e98c9"/><path d="M49 3.6 V15.4 M43.1 9.5 H54.9" stroke="#fff" stroke-width="2.2"/>
</svg>
<span class="t" style="left:188.4px;top:726.6px;line-height:16px;font-size:9.5px;color:#000;letter-spacing:0.63px;transform:scaleX(1.08);transform-origin:0 0;-webkit-text-stroke:0.12px;">Materials</span>
<svg style="left:260.5px;top:664px" width="60" height="53" viewBox="0 0 60 53">
<defs><linearGradient id="fb1" x1="0" y1="0" x2="0" y2="1"><stop offset="0" stop-color="#74828b"/><stop offset="1" stop-color="#4d5960"/></linearGradient><linearGradient id="ft1" x1="0" y1="0" x2="0" y2="1"><stop offset="0" stop-color="#e6e6e6"/><stop offset="1" stop-color="#a9adaf"/></linearGradient></defs>
<path d="M0.5 11 Q0.5 7.6 4 7.6 H20 Q23 7.6 24.4 10 L26 12.6 H57 V20 H0.5Z" fill="url(#ft1)"/>
<path d="M0.3 14.6 H57 V48 Q57 51.6 53.4 51.6 H3.9 Q0.3 51.6 0.3 48Z" fill="url(#fb1)"/>
<path d="M0.3 14.6 H57 V16 H0.3Z" fill="#8e9aa1" opacity="0.8"/>
<path d="M0.3 40 L57 18 V48 Q57 51.6 53.4 51.6 H3.9 Q0.3 51.6 0.3 48Z" fill="#000" opacity="0.06"/>
<rect x="39.5" y="0" width="19" height="19" rx="2" fill="#2e98c9"/><path d="M49 3.6 V15.4 M43.1 9.5 H54.9" stroke="#fff" stroke-width="2.2"/>
</svg>
<span class="t" style="left:270.7px;top:726.6px;line-height:16px;font-size:9.5px;color:#000;letter-spacing:0.52px;transform:scaleX(1.08);transform-origin:0 0;-webkit-text-stroke:0.12px;">Models</span>
<svg style="left:336.5px;top:664px" width="60" height="53" viewBox="0 0 60 53">
<defs><linearGradient id="fb2" x1="0" y1="0" x2="0" y2="1"><stop offset="0" stop-color="#74828b"/><stop offset="1" stop-color="#4d5960"/></linearGradient><linearGradient id="ft2" x1="0" y1="0" x2="0" y2="1"><stop offset="0" stop-color="#e6e6e6"/><stop offset="1" stop-color="#a9adaf"/></linearGradient></defs>
<path d="M0.5 11 Q0.5 7.6 4 7.6 H20 Q23 7.6 24.4 10 L26 12.6 H57 V20 H0.5Z" fill="url(#ft2)"/>
<path d="M0.3 14.6 H57 V48 Q57 51.6 53.4 51.6 H3.9 Q0.3 51.6 0.3 48Z" fill="url(#fb2)"/>
<path d="M0.3 14.6 H57 V16 H0.3Z" fill="#8e9aa1" opacity="0.8"/>
<path d="M0.3 40 L57 18 V48 Q57 51.6 53.4 51.6 H3.9 Q0.3 51.6 0.3 48Z" fill="#000" opacity="0.06"/>
<rect x="39.5" y="0" width="19" height="19" rx="2" fill="#2e98c9"/><path d="M49 3.6 V15.4 M43.1 9.5 H54.9" stroke="#fff" stroke-width="2.2"/>
</svg>
<span class="t" style="left:345.5px;top:726.6px;line-height:16px;font-size:9.5px;color:#000;letter-spacing:0.39px;transform:scaleX(1.08);transform-origin:0 0;-webkit-text-stroke:0.12px;">Prefabs</span>
<div class="a" style="left:165px;top:946px;width:746px;height:16px;background:#dfdfdf;border-top:1px solid #9a9a9a;box-sizing:border-box"></div>
<div class="a" style="left:840px;top:952.5px;width:55px;height:4px;border-radius:2px;background:linear-gradient(#7e7e7e,#b0b0b0)"></div>
<div class="a" style="left:867px;top:949.5px;width:10px;height:10px;border-radius:5px;background:radial-gradient(circle at 40% 35%,#fafafa,#bdbdbd);border:1px solid #6f6f6f;box-sizing:border-box"></div>
<div class="panel" style="left:914px;top:92px;width:366px;height:871px;border-left:1px solid #7c7c7c;border-bottom:1px solid #7c7c7c"></div>
<div class="tab" style="left:915px;top:75px;width:88px;height:18px"></div>
<svg style="left:924.5px;top:78.5px" width="10.5" height="10.5" viewBox="0 0 11 11"><circle cx="5.5" cy="5.5" r="5.2" fill="#2c2c2c"/><path d="M4 4.6 H6.2 V8.2 M3.8 8.3 H7.4" stroke="#fff" stroke-width="1.3" fill="none"/><circle cx="5.4" cy="2.7" r="0.9" fill="#fff"/></svg>
<span class="t" style="left:939.5px;top:76.3px;line-height:16px;font-size:11px;color:#111;letter-spacing:0.70px;transform:scaleX(1.08);transform-origin:0 0;-webkit-text-stroke:0.12px;">Inspector</span>
<span class="t" style="left:1010.5px;top:76.3px;line-height:16px;font-size:11px;color:#1a1a1a;letter-spacing:0.48px;transform:scaleX(1.08);transform-origin:0 0;-webkit-text-stroke:0.12px;">Services</span>
<svg style="left:1249.5px;top:79px" width="8" height="10"><use href="#lock"/></svg>
<svg style="left:1262px;top:81.5px" width="13.5" height="8"><use href="#pmenu"/></svg>
<div class="a" style="left:970px;top:248px;width:320px;height:689px;background:#c2c2c2;border:1px solid #8a8a8a;box-sizing:border-box;box-shadow:0 1px 7px rgba(0,0,0,.38)"></div>
<div class="a" style="left:971px;top:249px;width:309px;height:23px;background:#a5a5a5;border-bottom:1px solid #8a8a8a;box-sizing:border-box"></div>
<div class="tab" style="left:970px;top:256px;width:75px;height:16px;background:linear-gradient(#e2e2e2,#c6c6c6)"></div>
<span class="t" style="left:976.6px;top:256.3px;line-height:16px;font-size:11px;color:#111;letter-spacing:0.45px;transform:scaleX(1.08);transform-origin:0 0;-webkit-text-stroke:0.12px;">ProBuilder</span>
<svg style="left:1265px;top:250px" width="15" height="20" viewBox="0 0 15 20"><rect x="2" y="3.4" width="4.6" height="4.4" fill="#e8e8e8" stroke="#222" stroke-width="1.2"/><path d="M2 3.6 H6.6" stroke="#222" stroke-width="1.6"/><path d="M12 3 L15 6 M15 3 L12 6" stroke="#222" stroke-width="1.2"/><path d="M9 12.5 H14 L11.5 15.5Z" fill="#444"/></svg>
<div class="a" style="left:974px;top:275px;width:4px;height:17px;background:#b8683a"></div>
<span class="t" style="left:982.2px;top:276px;line-height:16px;font-size:11px;color:#000;letter-spacing:0.26px;transform:scaleX(1.08);transform-origin:0 0;-webkit-text-stroke:0.12px;">New Shape</span>
<div class="a" style="left:1086px;top:275px;width:21px;height:16px;border:1px solid #b8683a;box-sizing:border-box"></div>
<svg style="left:1092px;top:278.5px" width="9" height="9" viewBox="0 0 9 9"><path d="M4.5 0.5 V8.5 M0.5 4.5 H8.5" stroke="#000" stroke-width="1.1"/></svg>
<div class="a" style="left:974px;top:300px;width:4px;height:17px;background:#b8683a"></div>
<span class="t" style="left:982.2px;top:301px;line-height:16px;font-size:11px;color:#000;letter-spacing:0.53px;transform:scaleX(1.08);transform-origin:0 0;-webkit-text-stroke:0.12px;">Smoothing</span>
<div class="a" style="left:974px;top:325px;width:4px;height:17px;background:#b8683a"></div>
<span class="t" style="left:982.2px;top:326px;line-height:16px;font-size:11px;color:#000;letter-spacing:0.34px;transform:scaleX(1.08);transform-origin:0 0;-webkit-text-stroke:0.12px;">UV Editor</span>
<div class="a" style="left:974px;top:350px;width:4px;height:17px;background:#3b88b8"></div>
<span class="t" style="left:982.2px;top:351px;line-height:16px;font-size:11px;color:#000;letter-spacing:0.48px;transform:scaleX(1.08);transform-origin:0 0;-webkit-text-stroke:0.12px;">Orientation: Global</span>
<div class="a" style="left:974px;top:375px;width:4px;height:17px;background:#9ab877"></div>
<span class="t" style="left:982.2px;top:376px;line-height:16px;font-size:11px;color:#777;letter-spacing:0.60px;transform:scaleX(1.08);transform-origin:0 0;-webkit-text-stroke:0.12px;">Export</span>
<div class="a" style="left:1086px;top:375px;width:21px;height:16px;border:1px solid #9ab877;box-sizing:border-box"></div>
<svg style="left:1092px;top:378.5px" width="9" height="9" viewBox="0 0 9 9"><path d="M4.5 0.5 V8.5 M0.5 4.5 H8.5" stroke="#777" stroke-width="1.1"/></svg>
<div class="a" style="left:974px;top:400px;width:4px;height:17px;background:#9ab877"></div>
<span class="t" style="left:982.2px;top:401px;line-height:16px;font-size:11px;color:#777;letter-spacing:0.44px;transform:scaleX(1.08);transform-origin:0 0;-webkit-text-stroke:0.12px;">Triangulate</span>
<div class="a" style="left:974px;top:425px;width:4px;height:17px;background:#6a9a22"></div>
<span class="t" style="left:982.2px;top:426px;line-height:16px;font-size:11px;color:#000;letter-spacing:0.27px;transform:scaleX(1.08);transform-origin:0 0;-webkit-text-stroke:0.12px;">Lightmap UVs</span>
<div class="a" style="left:1086px;top:425px;width:21px;height:16px;border:1px solid #6a9a22;box-sizing:border-box"></div>
<svg style="left:1092px;top:428.5px" width="9" height="9" viewBox="0 0 9 9"><path d="M4.5 0.5 V8.5 M0.5 4.5 H8.5" stroke="#000" stroke-width="1.1"/></svg>
<div class="a" style="left:974px;top:450px;width:4px;height:17px;background:#9ab877"></div>
<span class="t" style="left:982.2px;top:451px;line-height:16px;font-size:11px;color:#777;letter-spacing:0.27px;transform:scaleX(1.08);transform-origin:0 0;-webkit-text-stroke:0.12px;">Flip Normals</span>
<div class="a" style="left:974px;top:475px;width:4px;height:17px;background:#9ab877"></div>
<span class="t" style="left:982.2px;top:476px;line-height:16px;font-size:11px;color:#777;letter-spacing:0.37px;transform:scaleX(1.08);transform-origin:0 0;-webkit-text-stroke:0.12px;">Merge Objects</span>
<div class="a" style="left:974px;top:500px;width:4px;height:17px;background:#9ab877"></div>
<span class="t" style="left:982.2px;top:501px;line-height:16px;font-size:11px;color:#777;letter-spacing:0.56px;transform:scaleX(1.08);transform-origin:0 0;-webkit-text-stroke:0.12px;">Set Trigger</span>
<div class="a" style="left:1115px;top:275px;width:4px;height:17px;background:#b8683a"></div>
<span class="t" style="left:1123px;top:276px;line-height:16px;font-size:11px;color:#000;letter-spacing:0.33px;transform:scaleX(1.08);transform-origin:0 0;-webkit-text-stroke:0.12px;">New Poly Shape</span>
<div class="a" style="left:1115px;top:300px;width:4px;height:17px;background:#b8683a"></div>
<span class="t" style="left:1123px;top:301px;line-height:16px;font-size:11px;color:#000;letter-spacing:0.42px;transform:scaleX(1.08);transform-origin:0 0;-webkit-text-stroke:0.12px;">Material Editor</span>
<div class="a" style="left:1115px;top:325px;width:4px;height:17px;background:#b8683a"></div>
<span class="t" style="left:1123px;top:326px;line-height:16px;font-size:11px;color:#000;letter-spacing:0.62px;transform:scaleX(1.08);transform-origin:0 0;-webkit-text-stroke:0.12px;">Vertex Colors</span>
<div class="a" style="left:1115px;top:350px;width:4px;height:17px;background:#9ab877"></div>
<span class="t" style="left:1123px;top:351px;line-height:16px;font-size:11px;color:#777;letter-spacing:0.55px;transform:scaleX(1.08);transform-origin:0 0;-webkit-text-stroke:0.12px;">Conform Normals</span>
<div class="a" style="left:1115px;top:375px;width:4px;height:17px;background:#9ab877"></div>
<span class="t" style="left:1123px;top:376px;line-height:16px;font-size:11px;color:#777;letter-spacing:0.37px;transform:scaleX(1.08);transform-origin:0 0;-webkit-text-stroke:0.12px;">ProBuilderize</span>
<div class="a" style="left:1227px;top:375px;width:21px;height:16px;border:1px solid #9ab877;box-sizing:border-box"></div>
<svg style="left:1233px;top:378.5px" width="9" height="9" viewBox="0 0 9 9"><path d="M4.5 0.5 V8.5 M0.5 4.5 H8.5" stroke="#777" stroke-width="1.1"/></svg>
<div class="a" style="left:1115px;top:400px;width:4px;height:17px;background:#9ab877"></div>
<span class="t" style="left:1123px;top:401px;line-height:16px;font-size:11px;color:#777;letter-spacing:0.56px;transform:scaleX(1.08);transform-origin:0 0;-webkit-text-stroke:0.12px;">Center Pivot</span>
<div class="a" style="left:1115px;top:425px;width:4px;height:17px;background:#9ab877"></div>
<span class="t" style="left:1123px;top:426px;line-height:16px;font-size:11px;color:#777;letter-spacing:0.50px;transform:scaleX(1.08);transform-origin:0 0;-webkit-text-stroke:0.12px;">Subdivide Object</span>
<div class="a" style="left:1115px;top:450px;width:4px;height:17px;background:#9ab877"></div>
<span class="t" style="left:1123px;top:451px;line-height:16px;font-size:11px;color:#777;letter-spacing:0.46px;transform:scaleX(1.08);transform-origin:0 0;-webkit-text-stroke:0.12px;">Mirror Objects</span>
<div class="a" style="left:1227px;top:450px;width:21px;height:16px;border:1px solid #9ab877;box-sizing:border-box"></div>
<svg style="left:1233px;top:453.5px" width="9" height="9" viewBox="0 0 9 9"><path d="M4.5 0.5 V8.5 M0.5 4.5 H8.5" stroke="#777" stroke-width="1.1"/></svg>
<div class="a" style="left:1115px;top:475px;width:4px;height:17px;background:#9ab877"></div>
<span class="t" style="left:1123px;top:476px;line-height:16px;font-size:11px;color:#777;letter-spacing:0.47px;transform:scaleX(1.08);transform-origin:0 0;-webkit-text-stroke:0.12px;">Freeze Transform</span>
<div class="a" style="left:1115px;top:500px;width:4px;height:17px;background:#9ab877"></div>
<span class="t" style="left:1123px;top:501px;line-height:16px;font-size:11px;color:#777;letter-spacing:0.50px;transform:scaleX(1.08);transform-origin:0 0;-webkit-text-stroke:0.12px;">Set Collider</span>
<svg style="left:3px;top:966px" width="15" height="15" viewBox="0 0 15 15"><path d="M4.6 0.6 H10.4 L14.4 4.6 V10.4 L10.4 14.4 H4.6 L0.6 10.4 V4.6Z" fill="#e02020" stroke="#8a0f0f" stroke-width="0.8"/><path d="M7.5 3 V9" stroke="#fff" stroke-width="2.2"/><circle cx="7.5" cy="11.6" r="1.2" fill="#fff"/></svg>
<span class="t" style="left:20.5px;top:967px;line-height:16px;font-size:11px;color:#720000;letter-spacing:0.45px;transform:scaleX(1.08);transform-origin:0 0;-webkit-text-stroke:0.12px;">NullReferenceException: Object reference not set to an instance of an object</span>
<div class="a" style="left:0;top:984px;width:1280px;height:40px;background:#313131"></div>
<div class="a" style="left:395px;top:984px;width:47px;height:40px;background:#595959"></div>
<div class="a" style="left:55px;top:1022px;width:40px;height:2px;background:#fd9ca6"></div>
<div class="a" style="left:104px;top:1022px;width:32px;height:2px;background:#fd9ca6"></div>
<div class="a" style="left:395px;top:1022px;width:47px;height:2px;background:#fd9ca6"></div>
<div class="a" style="left:447px;top:1022px;width:40px;height:2px;background:#fd9ca6"></div>
<div class="a" style="left:496px;top:1022px;width:40px;height:2px;background:#fd9ca6"></div>
<div class="a" style="left:545px;top:1022px;width:40px;height:2px;background:#fd9ca6"></div>
<div class="a" style="left:137px;top:1022px;width:6px;height:2px;background:#c9808c"></div>
<svg style="left:16px;top:996px" width="16" height="16" viewBox="0 0 16 16"><path d="M0 2.3 L6.5 1.4 V7.5 H0Z M7.4 1.3 L16 0 V7.5 H7.4Z M0 8.4 H6.5 V14.6 L0 13.7Z M7.4 8.4 H16 V16 L7.4 14.7Z" fill="#fff"/></svg>
<svg style="left:63px;top:992px" width="24" height="24" viewBox="0 0 24 24"><circle cx="12" cy="12" r="11.5" fill="#db4437"/><path d="M12 12 L2.1 6.2 A11.5 11.5 0 0 0 7.2 22.4Z" fill="#0f9d58"/><path d="M12 12 L7.2 22.4 A11.5 11.5 0 0 0 23.3 9.8 L12 9.8Z" fill="#ffcd40"/><path d="M12 12 L23.4 10 A11.5 11.5 0 0 0 2.1 6.2Z" fill="#db4437"/><circle cx="12" cy="12" r="5.3" fill="#fff"/><circle cx="12" cy="12" r="4.2" fill="#4285f4"/></svg>
<svg style="left:112px;top:993px" width="24" height="22" viewBox="0 0 24 22"><path d="M1 2 H9 L11 4 H23 V20 H1Z" fill="#f5c84c"/><path d="M1 6 H23 V20 H1Z" fill="#fbe08a"/><path d="M3 11 H21 V20 H3Z" fill="#3b9be8"/><path d="M8 15 H16 V20 H8Z" fill="#fbe08a"/><path d="M3 11 H21 V13 H3Z" fill="#62b5f3"/></svg>
<svg style="left:161px;top:990px" width="24" height="26" viewBox="0 0 24 26"><path d="M7.5 7 V5 Q7.5 1 12 1 Q16.5 1 16.5 5 V7" fill="none" stroke="#fff" stroke-width="1.4"/><path d="M1 7 H23 V23 Q23 25 21 25 H3 Q1 25 1 23Z" fill="#fff"/><rect x="6.6" y="10.6" width="4.8" height="4.8" fill="#f25022"/><rect x="12.6" y="10.6" width="4.8" height="4.8" fill="#7fba00"/><rect x="6.6" y="16.6" width="4.8" height="4.8" fill="#00a4ef"/><rect x="12.6" y="16.6" width="4.8" height="4.8" fill="#ffb900"/></svg>
<svg style="left:210.5px;top:991.6px" width="23" height="24" viewBox="0 0 25 26"><path d="M12.5 0.5 L24.5 6 L12.5 11.5 L0.5 6Z" fill="#62a53e"/><path d="M0.5 6 L12.5 11.5 V25.5 L0.5 19.5Z" fill="#85593a"/><path d="M24.5 6 L12.5 11.5 V25.5 L24.5 19.5Z" fill="#64422a"/><path d="M0.5 6 L12.5 11.5 V14.2 L9 13.6 L6 11.4 L3 11 L0.5 8.6Z" fill="#4f8f35"/><path d="M24.5 6 L12.5 11.5 V14.2 L16 13.4 L19 11 L22 10.6 L24.5 8.4Z" fill="#3f7a2a"/><path d="M6 4.5 L12 2.4 L18 5 L12 7.4Z" fill="#76bb4c" opacity="0.7"/></svg>
<svg style="left:258px;top:991px" width="26" height="26" viewBox="258 991 26 26"><defs><linearGradient id="stg" x1="0" y1="0" x2="0" y2="1"><stop offset="0" stop-color="#111b40"/><stop offset="0.55" stop-color="#15306a"/><stop offset="1" stop-color="#1c7ab4"/></linearGradient><clipPath id="stc"><circle cx="270.8" cy="1003.8" r="11.2"/></clipPath></defs><circle cx="270.8" cy="1003.8" r="11.2" fill="url(#stg)"/><g clip-path="url(#stc)"><path d="M258 1001.6 L265.6 1004.8 L271.6 1000.2 L274.6 1003.6 L268.8 1008 Q268.6 1010.6 266 1010.8 Q263.6 1010.8 263 1008.6 L258 1006.6Z" fill="#fff"/><circle cx="275" cy="999.7" r="4.3" fill="#fff"/><circle cx="275" cy="999.7" r="2.9" fill="#1a2f68"/><circle cx="275" cy="999.7" r="2" fill="#e4ebf6"/><circle cx="266" cy="1007.6" r="2" fill="none" stroke="#16346e" stroke-width="0.8"/></g></svg>
<svg style="left:307px;top:992px" width="25" height="25" viewBox="0 0 25 25"><circle cx="12.5" cy="12.5" r="12" fill="#fff"/><circle cx="12.5" cy="12.5" r="10.6" fill="#ff66aa"/><text x="12.5" y="15.6" font-family="Liberation Sans" font-size="8.5" font-weight="bold" fill="#fff" text-anchor="middle">osu!</text></svg>
<svg style="left:357px;top:992px" width="24" height="24" viewBox="0 0 24 24"><rect width="24" height="24" fill="#000"/><rect x="4" y="4" width="16" height="16" fill="#8a5a3a"/><rect x="4" y="4" width="16" height="4" fill="#4f8a33"/><path d="M4 8 H7 V10 H4Z M10 8 H13 V9.5 H10Z M16 8 H20 V10 H16Z" fill="#4f8a33"/></svg>
<svg style="left:406.5px;top:991.5px" width="22.5" height="22.5" viewBox="0 0 14 14"><path d="M1.2 7 L11.9 1.2 Q14.6 7 11.9 12.8 Z" fill="#fff" stroke="#151515" stroke-width="2" stroke-linejoin="round"/><path d="M1.5 7 H8.7 M8.7 7 L11.8 1.6 M8.7 7 L11.8 12.4" fill="none" stroke="#151515" stroke-width="1.6"/></svg>
<svg style="left:450px;top:988px" width="34" height="32" viewBox="450 988 34 32"><path d="M473.1 991.8 L479 994.2 V1013.7 L472.3 1016 L455.2 1010.6 L473.1 1011Z" fill="#0a7bd1"/><path d="M457 998.3 L469.4 1007.6 M457 1005.3 L469.4 995.6" stroke="#0a7bd1" stroke-width="2.8" fill="none"/><path d="M469.4 994.2 V1009" stroke="#0a7bd1" stroke-width="2.2"/></svg>
<svg style="left:500px;top:988px" width="36" height="34" viewBox="500 988 36 34"><defs><linearGradient id="dcg" x1="0" y1="0" x2="0" y2="1"><stop offset="0" stop-color="#6d7dcb"/><stop offset="1" stop-color="#5565b6"/></linearGradient></defs><rect x="506" y="994" width="19.8" height="18" rx="2.5" fill="url(#dcg)"/><path d="M510.4 999.6 Q515.9 997 521.4 999.6 Q523.2 1003.4 522.8 1007.2 L520.2 1008.6 L519.3 1007.2 H512.5 L511.6 1008.6 L509 1007.2 Q508.6 1003.4 510.4 999.6Z" fill="#fff"/><circle cx="513.4" cy="1003.6" r="1.5" fill="#6272c2"/><circle cx="518.4" cy="1003.6" r="1.5" fill="#6272c2"/><circle cx="522" cy="1009.8" r="7" fill="#ef464a"/><text x="522" y="1013" font-family="Liberation Sans" font-size="8.8" font-weight="bold" fill="#fff" text-anchor="middle">9+</text></svg>
<svg style="left:550px;top:988px" width="30" height="32" viewBox="550 988 30 32"><path d="M560.7 993.2 L563 996.3 Q565 997 567 996.3 L569.3 993.2 Q573 997 573.4 1002 Q573 1008.5 565 1015 Q557 1008.5 556.6 1002 Q557 997 560.7 993.2Z" fill="#fff"/><ellipse cx="560.9" cy="1003.8" rx="3.5" ry="2" transform="rotate(38 560.9 1003.8)" fill="#111"/><ellipse cx="569.1" cy="1003.8" rx="3.5" ry="2" transform="rotate(-38 569.1 1003.8)" fill="#111"/><path d="M563.6 1010.6 L565 1009.2 L566.4 1010.6" fill="none" stroke="#222" stroke-width="0.9"/></svg>
<svg style="left:1018px;top:997px" width="16" height="14" viewBox="0 0 16 14"><path d="M1.5 10 L8 3.5 L14.5 10" fill="none" stroke="#fff" stroke-width="1.3"/></svg>
<svg style="left:1042px;top:995px" width="20" height="18" viewBox="0 0 20 18"><path d="M4 12 Q0.8 12 0.8 9 Q0.8 6.4 3.6 6.2 Q4.4 2.6 8 2.6 Q10.8 2.6 12 5 Q16 4.6 16.6 8 Q19 8.6 19 10.4 Q19 12 17 12Z" fill="#e8e8e8"/><circle cx="12.5" cy="12.5" r="4.3" fill="#2b6fd6"/><path d="M10.3 12.5 A2.2 2.2 0 0 1 14.3 11.3 M14.7 12.5 A2.2 2.2 0 0 1 10.7 13.7" fill="none" stroke="#fff" stroke-width="1"/></svg>
<svg style="left:1066px;top:996px" width="18" height="16" viewBox="0 0 18 16"><rect x="4.6" y="2.6" width="12" height="8" fill="none" stroke="#fff" stroke-width="1.1"/><path d="M10.6 10.6 V13.6 M6.6 14 H14.6" stroke="#fff" stroke-width="1.1"/><rect x="1" y="1" width="4.4" height="4.4" fill="#2d2d2d" stroke="#fff" stroke-width="0.9"/><path d="M3.2 5.4 V9 H4.6" fill="none" stroke="#fff" stroke-width="0.9"/></svg>
<svg style="left:1090px;top:996px" width="18" height="16" viewBox="0 0 18 16"><path d="M1 5.6 H3.6 L7 2.4 V13.6 L3.6 10.4 H1Z" fill="none" stroke="#fff" stroke-width="1"/><path d="M9.4 5.6 Q10.8 8 9.4 10.4" fill="none" stroke="#fff" stroke-width="1"/><path d="M11.6 3.8 Q14 8 11.6 12.2" fill="none" stroke="#bbb" stroke-width="1"/><path d="M13.8 2 Q17 8 13.8 14" fill="none" stroke="#888" stroke-width="1"/></svg>
<svg style="left:1114px;top:997px" width="18" height="13" viewBox="0 0 18 13"><path d="M4.4 12 Q0.8 12 0.8 8.8 Q0.8 6 3.8 5.8 Q4.6 1.4 9 1.4 Q12.6 1.4 13.6 4.8 Q17.2 5 17.2 8.4 Q17.2 12 14 12Z" fill="#fff"/><path d="M9 4.6 L12 8 H10.2 V10.6 H7.8 V8 H6Z" fill="#2d2d2d"/></svg>
<svg style="left:1138px;top:996px" width="16" height="16" viewBox="0 0 16 16"><circle cx="8" cy="8" r="7.4" fill="#8c8c8c"/><path d="M4.6 4.6 L11.4 11.4 M11.4 4.6 L4.6 11.4" stroke="#2d2d2d" stroke-width="1.7"/></svg>
<span class="t" style="left:1178px;top:987px;line-height:16px;font-size:12px;color:#fff;letter-spacing:-0.31px;">20:19</span>
<span class="t" style="left:1163px;top:1004.5px;line-height:16px;font-size:12px;color:#fff;letter-spacing:-0.08px;">2019/02/02</span>
<svg style="left:1239px;top:995px" width="18" height="18" viewBox="0 0 18 18"><path d="M1 1 H16 V12.4 H9.6 L6.6 15.6 V12.4 H1Z" fill="#fff"/><path d="M3.6 4.2 H13.4 M3.6 6.8 H13.4 M3.6 9.4 H10.4" stroke="#2d2d2d" stroke-width="0.9"/><circle cx="13.4" cy="12.8" r="2.4" fill="#2d2d2d" stroke="#fff" stroke-width="0.9"/></svg>
<div class="a" style="left:1274px;top:984px;width:1px;height:40px;background:#6a6a6a"></div>
</div></body></html>
